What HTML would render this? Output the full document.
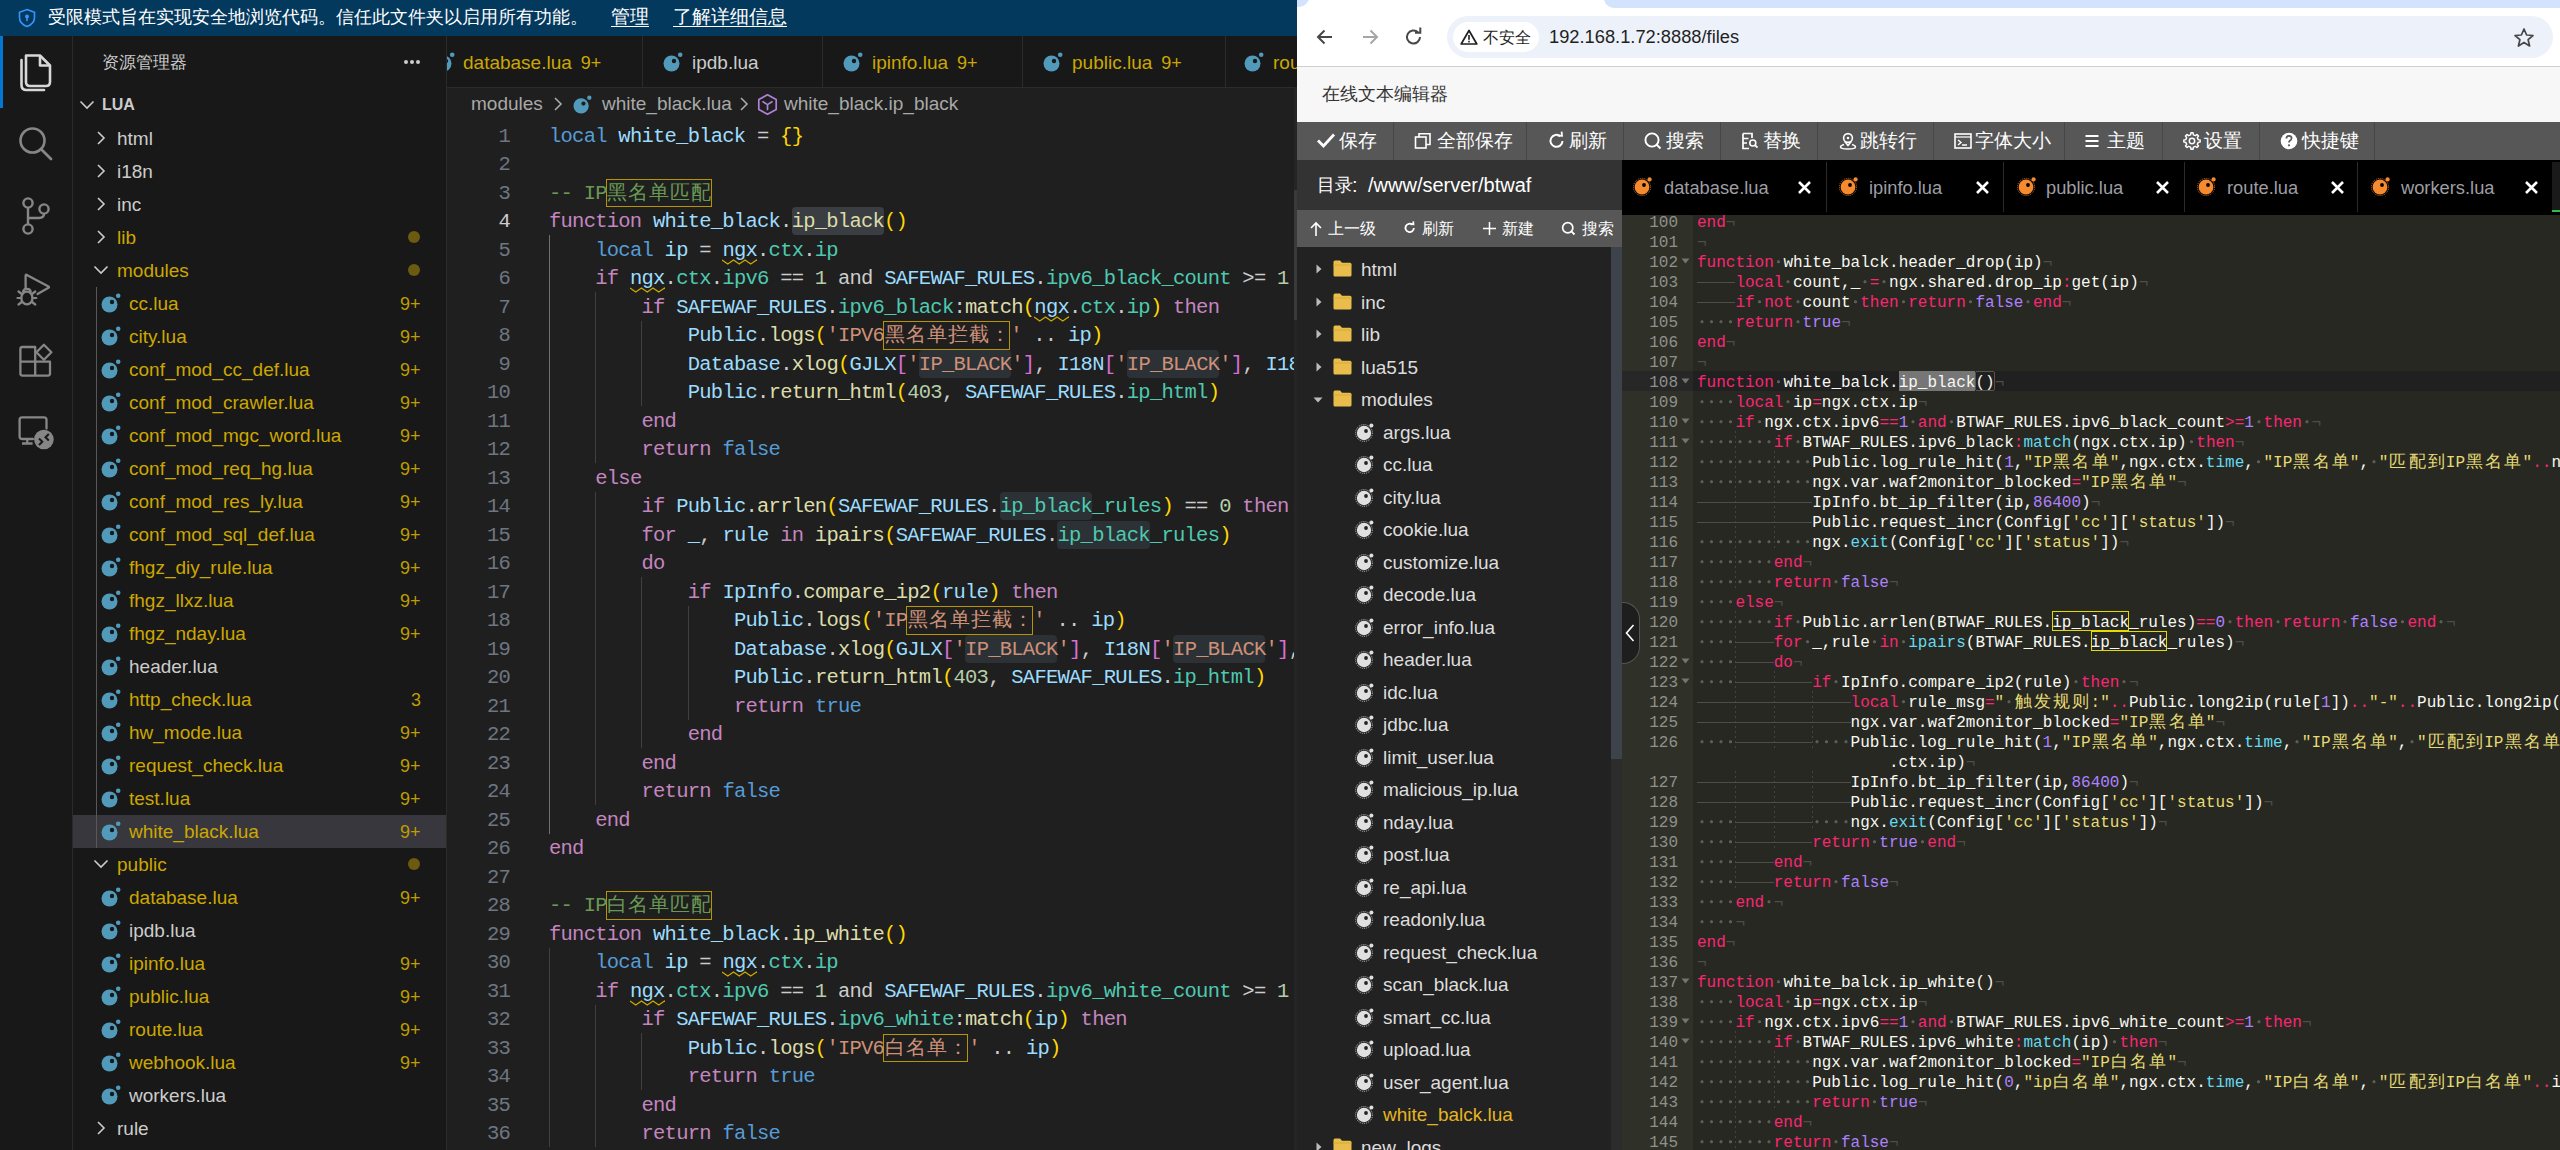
<!DOCTYPE html><html><head><meta charset="utf-8"><style>
*{box-sizing:border-box}
html,body{margin:0;padding:0}
body{width:2560px;height:1150px;overflow:hidden;position:relative;background:#1f1f1f;font-family:"Liberation Sans",sans-serif}
.a{position:absolute}
.t{position:absolute;white-space:pre;line-height:1}
#vsc{position:absolute;left:0;top:0;width:1297px;height:1150px;background:#1f1f1f;overflow:hidden}
#br{position:absolute;left:1297px;top:0;width:1263px;height:1150px;background:#fff;overflow:hidden}
.vl{position:absolute;left:549px;height:28.5px;line-height:28.5px;white-space:pre;font-family:"Liberation Mono",monospace;font-size:20.5px;letter-spacing:-0.75px;margin-top:1.5px}
.ln{position:absolute;left:460px;width:50px;text-align:right;height:28.5px;line-height:28.5px;font-family:"Liberation Mono",monospace;font-size:20.5px;letter-spacing:-0.75px;color:#6e7681;margin-top:1.5px}
b.k2{font-weight:normal;display:inline-block;width:21px;text-align:center;font-size:20px;line-height:28.5px;letter-spacing:0}
.sb{position:absolute;height:33px;line-height:33px;font-size:19px;white-space:pre;color:#cccccc}
.bad{position:absolute;left:400px;height:33px;line-height:33px;font-size:18px;color:#bf9c00;margin-top:1px}
.dot{position:absolute;left:408px;width:12px;height:12px;border-radius:6px;background:#6b5a10}
.al{position:absolute;left:1697px;height:20px;line-height:20px;margin-top:1.8px;white-space:pre;font-family:"Liberation Mono",monospace;font-size:16px;color:#f8f8f2}
.an{position:absolute;left:325px;width:56px;text-align:right;height:20px;line-height:20px;margin-top:1.8px;font-family:"Liberation Mono",monospace;font-size:16px;color:#8f908a}
.sp{display:inline-block;width:9.6px;height:20px;vertical-align:top;color:transparent;background:radial-gradient(circle at 50% 8.8px,#5d5d57 0,#5d5d57 1.2px,transparent 1.9px)}
.eol{color:#4e4e48}
.tb{display:inline-block;height:20px;vertical-align:top;background:linear-gradient(#4e4e48,#4e4e48) no-repeat 0 9.5px/100% 1px}
b.a2{font-weight:normal;display:inline-block;width:19.2px;text-align:center;font-size:17px;vertical-align:top;line-height:20px}
.ft{position:absolute;height:32px;line-height:32px;font-size:19px;color:#dddddd;white-space:pre}
.tbb{position:absolute;top:122px;height:38px;line-height:38px;font-size:19px;color:#fff;white-space:pre}
.tbs{position:absolute;top:122px;width:1px;height:38px;background:#474747}
.stb{position:absolute;top:210px;height:37px;line-height:37px;font-size:15.5px;color:#fff;white-space:pre}
.tab2{position:absolute;top:161px;height:54px;line-height:54px;font-size:18.3px;color:#9d9ea4;white-space:pre}
.x2{position:absolute;top:180px;width:15px;height:15px}
</style></head><body>
<div id="vsc">
<div class="a" style="left:0;top:0;width:1297px;height:36px;background:#04395e"></div>
<svg class="a" style="left:17px;top:8px" width="20" height="20" viewBox="0 0 20 20"><path d="M10 1.5 L17.5 4.2 V9.5 C17.5 14 14.3 17 10 18.5 C5.7 17 2.5 14 2.5 9.5 V4.2 Z" fill="none" stroke="#3794ff" stroke-width="1.6"/><circle cx="10" cy="8.6" r="2" fill="#3794ff"/><rect x="9.2" y="9.5" width="1.6" height="3.6" fill="#3794ff"/></svg>
<div class="t" style="left:48px;top:8px;font-size:18px;color:#ffffff">受限模式旨在实现安全地浏览代码。信任此文件夹以启用所有功能。</div>
<div class="t" style="left:611px;top:7px;font-size:19px;color:#ffffff;text-decoration:underline;text-underline-offset:3px">管理</div>
<div class="t" style="left:673px;top:7px;font-size:19px;color:#ffffff;text-decoration:underline;text-underline-offset:3px">了解详细信息</div>
<div class="a" style="left:0;top:36px;width:72px;height:1114px;background:#181818"></div>
<div class="a" style="left:0;top:36px;width:3px;height:72px;background:#0078d4"></div>
<svg class="a" style="left:17px;top:50px" width="38" height="42" viewBox="0 0 38 42"><path d="M9 5.5 H23 L33 15.5 V32 Q33 36 29 36 H13 Q9 36 9 32 Z" fill="none" stroke="#d7d7d7" stroke-width="2.6" stroke-linejoin="round"/><path d="M23 5.5 V15.5 H33" fill="none" stroke="#d7d7d7" stroke-width="2.6" stroke-linejoin="round"/><path d="M4.5 10 V35 Q4.5 40 9.5 40 H27" fill="none" stroke="#d7d7d7" stroke-width="2.6" stroke-linecap="round"/></svg>
<svg class="a" style="left:17px;top:125px" width="38" height="38" viewBox="0 0 38 38"><circle cx="15.5" cy="15.5" r="12" fill="none" stroke="#868686" stroke-width="2.6"/><path d="M24 24 L34 34" stroke="#868686" stroke-width="2.8" stroke-linecap="round"/></svg>
<svg class="a" style="left:17px;top:196px" width="38" height="40" viewBox="0 0 38 40"><circle cx="11" cy="7" r="4.6" fill="none" stroke="#868686" stroke-width="2.4"/><circle cx="11" cy="33" r="4.6" fill="none" stroke="#868686" stroke-width="2.4"/><circle cx="27" cy="13" r="4.6" fill="none" stroke="#868686" stroke-width="2.4"/><path d="M11 11.6 V28.4 M27 17.6 Q27 22 22 22 H11" fill="none" stroke="#868686" stroke-width="2.4"/></svg>
<svg class="a" style="left:16px;top:270px" width="40" height="40" viewBox="0 0 40 40"><path d="M9.6 19 V5.5 Q9.6 4.3 10.8 4.9 L32.5 16.6 Q33.5 17.2 32.5 17.8 L21.5 24" fill="none" stroke="#868686" stroke-width="2.3" stroke-linejoin="round" stroke-linecap="round"/><path d="M7 22.5 Q7 18.8 10.9 18.8 Q14.8 18.8 14.8 22.5" fill="none" stroke="#868686" stroke-width="2.2"/><ellipse cx="10.9" cy="28" rx="5.6" ry="6.3" fill="none" stroke="#868686" stroke-width="2.3"/><path d="M1.5 28 H5.3 M16.5 28 H20.3 M2.5 21.5 L5.8 24 M19.3 21.5 L16 24 M2.5 34.5 L5.8 32 M19.3 34.5 L16 32" fill="none" stroke="#868686" stroke-width="2.2" stroke-linecap="round"/></svg>
<svg class="a" style="left:17px;top:341px" width="38" height="38" viewBox="0 0 38 38"><path d="M3.4 8 Q3.4 6 5.4 6 H18.2 V20.7 H33 V32.6 Q33 34.6 31 34.6 H5.4 Q3.4 34.6 3.4 32.6 Z M3.4 20.7 H18.2 V34.6" fill="none" stroke="#868686" stroke-width="2.3" stroke-linejoin="round"/><path d="M26.9 3.7 L34.4 11.2 L26.9 18.7 L19.4 11.2 Z" fill="none" stroke="#868686" stroke-width="2.3" stroke-linejoin="round"/></svg>
<svg class="a" style="left:16px;top:412px" width="40" height="40" viewBox="0 0 40 40"><path d="M17 27 H6 Q3.6 27 3.6 24.6 V7.8 Q3.6 5.4 6 5.4 H28 Q30.5 5.4 30.5 7.8 V16.5" fill="none" stroke="#868686" stroke-width="2.3" stroke-linecap="round"/><path d="M6 31.5 H16.6 M11.3 27 V31.5" stroke="#868686" stroke-width="2.3"/><circle cx="27.9" cy="27.5" r="9.8" fill="#868686"/><path d="M23 26.5 L26.3 29.8 L23 33 M32.8 22 L29.5 25.3 L32.8 28.5" fill="none" stroke="#181818" stroke-width="2"/></svg>
<div class="a" style="left:72px;top:36px;width:375px;height:1114px;background:#181818;border-left:1px solid #2b2b2b;border-right:1px solid #2b2b2b"></div>
<div class="t" style="left:102px;top:54px;font-size:16.5px;color:#cccccc">资源管理器</div>
<div class="a" style="left:404px;top:60px;width:4px;height:4px;border-radius:2px;background:#ccc"></div><div class="a" style="left:410px;top:60px;width:4px;height:4px;border-radius:2px;background:#ccc"></div><div class="a" style="left:416px;top:60px;width:4px;height:4px;border-radius:2px;background:#ccc"></div>
<svg class="a" style="left:79px;top:97px" width="16" height="16" viewBox="0 0 16 16"><path d="M1.5 4.5 L8 11 L14.5 4.5" fill="none" stroke="#cccccc" stroke-width="1.6"/></svg>
<div class="t" style="left:102px;top:97px;font-size:16px;font-weight:bold;color:#cccccc">LUA</div>
<svg class="a" style="left:93px;top:130px" width="16" height="16" viewBox="0 0 16 16"><path d="M5 2 L11 8 L5 14" fill="none" stroke="#cccccc" stroke-width="1.6"/></svg>
<div class="sb" style="left:117px;top:121.5px;color:#cccccc">html</div>
<svg class="a" style="left:93px;top:163px" width="16" height="16" viewBox="0 0 16 16"><path d="M5 2 L11 8 L5 14" fill="none" stroke="#cccccc" stroke-width="1.6"/></svg>
<div class="sb" style="left:117px;top:154.5px;color:#cccccc">i18n</div>
<svg class="a" style="left:93px;top:196px" width="16" height="16" viewBox="0 0 16 16"><path d="M5 2 L11 8 L5 14" fill="none" stroke="#cccccc" stroke-width="1.6"/></svg>
<div class="sb" style="left:117px;top:187.5px;color:#cccccc">inc</div>
<svg class="a" style="left:93px;top:229px" width="16" height="16" viewBox="0 0 16 16"><path d="M5 2 L11 8 L5 14" fill="none" stroke="#cccccc" stroke-width="1.6"/></svg>
<div class="sb" style="left:117px;top:220.5px;color:#cca700">lib</div>
<div class="dot" style="top:231px"></div>
<svg class="a" style="left:93px;top:262px" width="16" height="16" viewBox="0 0 16 16"><path d="M1.5 4.5 L8 11 L14.5 4.5" fill="none" stroke="#cccccc" stroke-width="1.6"/></svg>
<div class="sb" style="left:117px;top:253.5px;color:#cca700">modules</div>
<div class="dot" style="top:264px"></div>
<svg style="position:absolute;left:101px;top:293px" width="20" height="20" viewBox="0 0 20 20"><circle cx="8.5" cy="11.5" r="8" fill="#519aba"/><circle cx="11" cy="9" r="2.2" fill="#181818"/><circle cx="17.2" cy="2.8" r="2.3" fill="#519aba"/></svg>
<div class="sb" style="left:129px;top:286.5px;color:#cca700">cc.lua</div>
<div class="bad" style="top:286.5px;left:400px">9+</div>
<svg style="position:absolute;left:101px;top:326px" width="20" height="20" viewBox="0 0 20 20"><circle cx="8.5" cy="11.5" r="8" fill="#519aba"/><circle cx="11" cy="9" r="2.2" fill="#181818"/><circle cx="17.2" cy="2.8" r="2.3" fill="#519aba"/></svg>
<div class="sb" style="left:129px;top:319.5px;color:#cca700">city.lua</div>
<div class="bad" style="top:319.5px;left:400px">9+</div>
<svg style="position:absolute;left:101px;top:359px" width="20" height="20" viewBox="0 0 20 20"><circle cx="8.5" cy="11.5" r="8" fill="#519aba"/><circle cx="11" cy="9" r="2.2" fill="#181818"/><circle cx="17.2" cy="2.8" r="2.3" fill="#519aba"/></svg>
<div class="sb" style="left:129px;top:352.5px;color:#cca700">conf_mod_cc_def.lua</div>
<div class="bad" style="top:352.5px;left:400px">9+</div>
<svg style="position:absolute;left:101px;top:392px" width="20" height="20" viewBox="0 0 20 20"><circle cx="8.5" cy="11.5" r="8" fill="#519aba"/><circle cx="11" cy="9" r="2.2" fill="#181818"/><circle cx="17.2" cy="2.8" r="2.3" fill="#519aba"/></svg>
<div class="sb" style="left:129px;top:385.5px;color:#cca700">conf_mod_crawler.lua</div>
<div class="bad" style="top:385.5px;left:400px">9+</div>
<svg style="position:absolute;left:101px;top:425px" width="20" height="20" viewBox="0 0 20 20"><circle cx="8.5" cy="11.5" r="8" fill="#519aba"/><circle cx="11" cy="9" r="2.2" fill="#181818"/><circle cx="17.2" cy="2.8" r="2.3" fill="#519aba"/></svg>
<div class="sb" style="left:129px;top:418.5px;color:#cca700">conf_mod_mgc_word.lua</div>
<div class="bad" style="top:418.5px;left:400px">9+</div>
<svg style="position:absolute;left:101px;top:458px" width="20" height="20" viewBox="0 0 20 20"><circle cx="8.5" cy="11.5" r="8" fill="#519aba"/><circle cx="11" cy="9" r="2.2" fill="#181818"/><circle cx="17.2" cy="2.8" r="2.3" fill="#519aba"/></svg>
<div class="sb" style="left:129px;top:451.5px;color:#cca700">conf_mod_req_hg.lua</div>
<div class="bad" style="top:451.5px;left:400px">9+</div>
<svg style="position:absolute;left:101px;top:491px" width="20" height="20" viewBox="0 0 20 20"><circle cx="8.5" cy="11.5" r="8" fill="#519aba"/><circle cx="11" cy="9" r="2.2" fill="#181818"/><circle cx="17.2" cy="2.8" r="2.3" fill="#519aba"/></svg>
<div class="sb" style="left:129px;top:484.5px;color:#cca700">conf_mod_res_ly.lua</div>
<div class="bad" style="top:484.5px;left:400px">9+</div>
<svg style="position:absolute;left:101px;top:524px" width="20" height="20" viewBox="0 0 20 20"><circle cx="8.5" cy="11.5" r="8" fill="#519aba"/><circle cx="11" cy="9" r="2.2" fill="#181818"/><circle cx="17.2" cy="2.8" r="2.3" fill="#519aba"/></svg>
<div class="sb" style="left:129px;top:517.5px;color:#cca700">conf_mod_sql_def.lua</div>
<div class="bad" style="top:517.5px;left:400px">9+</div>
<svg style="position:absolute;left:101px;top:557px" width="20" height="20" viewBox="0 0 20 20"><circle cx="8.5" cy="11.5" r="8" fill="#519aba"/><circle cx="11" cy="9" r="2.2" fill="#181818"/><circle cx="17.2" cy="2.8" r="2.3" fill="#519aba"/></svg>
<div class="sb" style="left:129px;top:550.5px;color:#cca700">fhgz_diy_rule.lua</div>
<div class="bad" style="top:550.5px;left:400px">9+</div>
<svg style="position:absolute;left:101px;top:590px" width="20" height="20" viewBox="0 0 20 20"><circle cx="8.5" cy="11.5" r="8" fill="#519aba"/><circle cx="11" cy="9" r="2.2" fill="#181818"/><circle cx="17.2" cy="2.8" r="2.3" fill="#519aba"/></svg>
<div class="sb" style="left:129px;top:583.5px;color:#cca700">fhgz_llxz.lua</div>
<div class="bad" style="top:583.5px;left:400px">9+</div>
<svg style="position:absolute;left:101px;top:623px" width="20" height="20" viewBox="0 0 20 20"><circle cx="8.5" cy="11.5" r="8" fill="#519aba"/><circle cx="11" cy="9" r="2.2" fill="#181818"/><circle cx="17.2" cy="2.8" r="2.3" fill="#519aba"/></svg>
<div class="sb" style="left:129px;top:616.5px;color:#cca700">fhgz_nday.lua</div>
<div class="bad" style="top:616.5px;left:400px">9+</div>
<svg style="position:absolute;left:101px;top:656px" width="20" height="20" viewBox="0 0 20 20"><circle cx="8.5" cy="11.5" r="8" fill="#519aba"/><circle cx="11" cy="9" r="2.2" fill="#181818"/><circle cx="17.2" cy="2.8" r="2.3" fill="#519aba"/></svg>
<div class="sb" style="left:129px;top:649.5px;color:#cccccc">header.lua</div>
<svg style="position:absolute;left:101px;top:689px" width="20" height="20" viewBox="0 0 20 20"><circle cx="8.5" cy="11.5" r="8" fill="#519aba"/><circle cx="11" cy="9" r="2.2" fill="#181818"/><circle cx="17.2" cy="2.8" r="2.3" fill="#519aba"/></svg>
<div class="sb" style="left:129px;top:682.5px;color:#cca700">http_check.lua</div>
<div class="bad" style="top:682.5px;left:411px">3</div>
<svg style="position:absolute;left:101px;top:722px" width="20" height="20" viewBox="0 0 20 20"><circle cx="8.5" cy="11.5" r="8" fill="#519aba"/><circle cx="11" cy="9" r="2.2" fill="#181818"/><circle cx="17.2" cy="2.8" r="2.3" fill="#519aba"/></svg>
<div class="sb" style="left:129px;top:715.5px;color:#cca700">hw_mode.lua</div>
<div class="bad" style="top:715.5px;left:400px">9+</div>
<svg style="position:absolute;left:101px;top:755px" width="20" height="20" viewBox="0 0 20 20"><circle cx="8.5" cy="11.5" r="8" fill="#519aba"/><circle cx="11" cy="9" r="2.2" fill="#181818"/><circle cx="17.2" cy="2.8" r="2.3" fill="#519aba"/></svg>
<div class="sb" style="left:129px;top:748.5px;color:#cca700">request_check.lua</div>
<div class="bad" style="top:748.5px;left:400px">9+</div>
<svg style="position:absolute;left:101px;top:788px" width="20" height="20" viewBox="0 0 20 20"><circle cx="8.5" cy="11.5" r="8" fill="#519aba"/><circle cx="11" cy="9" r="2.2" fill="#181818"/><circle cx="17.2" cy="2.8" r="2.3" fill="#519aba"/></svg>
<div class="sb" style="left:129px;top:781.5px;color:#cca700">test.lua</div>
<div class="bad" style="top:781.5px;left:400px">9+</div>
<div class="a" style="left:73px;top:814.5px;width:373px;height:33px;background:#37373d"></div>
<svg style="position:absolute;left:101px;top:821px" width="20" height="20" viewBox="0 0 20 20"><circle cx="8.5" cy="11.5" r="8" fill="#519aba"/><circle cx="11" cy="9" r="2.2" fill="#181818"/><circle cx="17.2" cy="2.8" r="2.3" fill="#519aba"/></svg>
<div class="sb" style="left:129px;top:814.5px;color:#cca700">white_black.lua</div>
<div class="bad" style="top:814.5px;left:400px">9+</div>
<svg class="a" style="left:93px;top:856px" width="16" height="16" viewBox="0 0 16 16"><path d="M1.5 4.5 L8 11 L14.5 4.5" fill="none" stroke="#cccccc" stroke-width="1.6"/></svg>
<div class="sb" style="left:117px;top:847.5px;color:#cca700">public</div>
<div class="dot" style="top:858px"></div>
<svg style="position:absolute;left:101px;top:887px" width="20" height="20" viewBox="0 0 20 20"><circle cx="8.5" cy="11.5" r="8" fill="#519aba"/><circle cx="11" cy="9" r="2.2" fill="#181818"/><circle cx="17.2" cy="2.8" r="2.3" fill="#519aba"/></svg>
<div class="sb" style="left:129px;top:880.5px;color:#cca700">database.lua</div>
<div class="bad" style="top:880.5px;left:400px">9+</div>
<svg style="position:absolute;left:101px;top:920px" width="20" height="20" viewBox="0 0 20 20"><circle cx="8.5" cy="11.5" r="8" fill="#519aba"/><circle cx="11" cy="9" r="2.2" fill="#181818"/><circle cx="17.2" cy="2.8" r="2.3" fill="#519aba"/></svg>
<div class="sb" style="left:129px;top:913.5px;color:#cccccc">ipdb.lua</div>
<svg style="position:absolute;left:101px;top:953px" width="20" height="20" viewBox="0 0 20 20"><circle cx="8.5" cy="11.5" r="8" fill="#519aba"/><circle cx="11" cy="9" r="2.2" fill="#181818"/><circle cx="17.2" cy="2.8" r="2.3" fill="#519aba"/></svg>
<div class="sb" style="left:129px;top:946.5px;color:#cca700">ipinfo.lua</div>
<div class="bad" style="top:946.5px;left:400px">9+</div>
<svg style="position:absolute;left:101px;top:986px" width="20" height="20" viewBox="0 0 20 20"><circle cx="8.5" cy="11.5" r="8" fill="#519aba"/><circle cx="11" cy="9" r="2.2" fill="#181818"/><circle cx="17.2" cy="2.8" r="2.3" fill="#519aba"/></svg>
<div class="sb" style="left:129px;top:979.5px;color:#cca700">public.lua</div>
<div class="bad" style="top:979.5px;left:400px">9+</div>
<svg style="position:absolute;left:101px;top:1019px" width="20" height="20" viewBox="0 0 20 20"><circle cx="8.5" cy="11.5" r="8" fill="#519aba"/><circle cx="11" cy="9" r="2.2" fill="#181818"/><circle cx="17.2" cy="2.8" r="2.3" fill="#519aba"/></svg>
<div class="sb" style="left:129px;top:1012.5px;color:#cca700">route.lua</div>
<div class="bad" style="top:1012.5px;left:400px">9+</div>
<svg style="position:absolute;left:101px;top:1052px" width="20" height="20" viewBox="0 0 20 20"><circle cx="8.5" cy="11.5" r="8" fill="#519aba"/><circle cx="11" cy="9" r="2.2" fill="#181818"/><circle cx="17.2" cy="2.8" r="2.3" fill="#519aba"/></svg>
<div class="sb" style="left:129px;top:1045.5px;color:#cca700">webhook.lua</div>
<div class="bad" style="top:1045.5px;left:400px">9+</div>
<svg style="position:absolute;left:101px;top:1085px" width="20" height="20" viewBox="0 0 20 20"><circle cx="8.5" cy="11.5" r="8" fill="#519aba"/><circle cx="11" cy="9" r="2.2" fill="#181818"/><circle cx="17.2" cy="2.8" r="2.3" fill="#519aba"/></svg>
<div class="sb" style="left:129px;top:1078.5px;color:#cccccc">workers.lua</div>
<svg class="a" style="left:93px;top:1120px" width="16" height="16" viewBox="0 0 16 16"><path d="M5 2 L11 8 L5 14" fill="none" stroke="#cccccc" stroke-width="1.6"/></svg>
<div class="sb" style="left:117px;top:1111.5px;color:#cccccc">rule</div>
<div class="a" style="left:96px;top:287px;width:1px;height:561px;background:#585858"></div>
<div class="a" style="left:447px;top:36px;width:850px;height:52px;background:#181818;border-bottom:1px solid #2b2b2b"></div>
<div class="a" style="left:642px;top:36px;width:1px;height:52px;background:#2b2b2b"></div>
<div class="a" style="left:822px;top:36px;width:1px;height:52px;background:#2b2b2b"></div>
<div class="a" style="left:1022px;top:36px;width:1px;height:52px;background:#2b2b2b"></div>
<div class="a" style="left:1225px;top:36px;width:1px;height:52px;background:#2b2b2b"></div>
<div class="a" style="left:447px;top:50px;width:8px;height:24px;overflow:hidden"><svg style="position:absolute;left:-12px;top:2px" width="20" height="20" viewBox="0 0 20 20"><circle cx="8.5" cy="11.5" r="8" fill="#519aba"/><circle cx="11" cy="9" r="2.2" fill="#181818"/><circle cx="17.2" cy="2.8" r="2.3" fill="#519aba"/></svg></div>
<div class="t" style="left:463px;top:53px;font-size:19px;color:#cca700">database.lua<span style="margin-left:9px;font-size:18px">9+</span></div>
<svg style="position:absolute;left:663px;top:52px" width="20" height="20" viewBox="0 0 20 20"><circle cx="8.5" cy="11.5" r="8" fill="#519aba"/><circle cx="11" cy="9" r="2.2" fill="#181818"/><circle cx="17.2" cy="2.8" r="2.3" fill="#519aba"/></svg>
<div class="t" style="left:692px;top:53px;font-size:19px;color:#cccccc">ipdb.lua</div>
<svg style="position:absolute;left:843px;top:52px" width="20" height="20" viewBox="0 0 20 20"><circle cx="8.5" cy="11.5" r="8" fill="#519aba"/><circle cx="11" cy="9" r="2.2" fill="#181818"/><circle cx="17.2" cy="2.8" r="2.3" fill="#519aba"/></svg>
<div class="t" style="left:872px;top:53px;font-size:19px;color:#cca700">ipinfo.lua<span style="margin-left:9px;font-size:18px">9+</span></div>
<svg style="position:absolute;left:1043px;top:52px" width="20" height="20" viewBox="0 0 20 20"><circle cx="8.5" cy="11.5" r="8" fill="#519aba"/><circle cx="11" cy="9" r="2.2" fill="#181818"/><circle cx="17.2" cy="2.8" r="2.3" fill="#519aba"/></svg>
<div class="t" style="left:1072px;top:53px;font-size:19px;color:#cca700">public.lua<span style="margin-left:9px;font-size:18px">9+</span></div>
<svg style="position:absolute;left:1244px;top:52px" width="20" height="20" viewBox="0 0 20 20"><circle cx="8.5" cy="11.5" r="8" fill="#519aba"/><circle cx="11" cy="9" r="2.2" fill="#181818"/><circle cx="17.2" cy="2.8" r="2.3" fill="#519aba"/></svg>
<div class="t" style="left:1273px;top:53px;font-size:19px;color:#cca700">route.lua<span style="margin-left:9px;font-size:18px">9+</span></div>
<div class="t" style="left:471px;top:94px;font-size:19px;color:#a9a9a9">modules</div>
<svg class="a" style="left:550px;top:96px" width="16" height="16" viewBox="0 0 16 16"><path d="M5 2 L11 8 L5 14" fill="none" stroke="#a9a9a9" stroke-width="1.6"/></svg>
<svg style="position:absolute;left:573px;top:95px" width="19" height="19" viewBox="0 0 20 20"><circle cx="8.5" cy="11.5" r="8" fill="#519aba"/><circle cx="11" cy="9" r="2.2" fill="#1f1f1f"/><circle cx="17.2" cy="2.8" r="2.3" fill="#519aba"/></svg>
<div class="t" style="left:602px;top:94px;font-size:19px;color:#a9a9a9">white_black.lua</div>
<svg class="a" style="left:736px;top:96px" width="16" height="16" viewBox="0 0 16 16"><path d="M5 2 L11 8 L5 14" fill="none" stroke="#a9a9a9" stroke-width="1.6"/></svg>
<svg class="a" style="left:756px;top:93px" width="23" height="23" viewBox="0 0 23 23"><path d="M11.5 1.8 L20.2 6.6 V16.4 L11.5 21.2 L2.8 16.4 V6.6 Z" fill="none" stroke="#b180d7" stroke-width="1.7" stroke-linejoin="round"/><path d="M7 8.8 L11.5 11.6 L16 8.8 M11.5 11.6 V16.5" fill="none" stroke="#b180d7" stroke-width="1.7" stroke-linecap="round"/></svg>
<div class="t" style="left:784px;top:94px;font-size:19px;color:#a9a9a9">white_black.ip_black</div>
<div class="a" style="left:549.0px;top:235.0px;width:1px;height:598.5px;background:#707070"></div>
<div class="a" style="left:595.2px;top:292.0px;width:1px;height:171.0px;background:#404040"></div>
<div class="a" style="left:641.4px;top:320.5px;width:1px;height:85.5px;background:#404040"></div>
<div class="a" style="left:595.2px;top:491.5px;width:1px;height:313.5px;background:#404040"></div>
<div class="a" style="left:641.4px;top:577.0px;width:1px;height:171.0px;background:#404040"></div>
<div class="a" style="left:687.6px;top:605.5px;width:1px;height:114.0px;background:#404040"></div>
<div class="a" style="left:549.0px;top:947.5px;width:1px;height:199.5px;background:#404040"></div>
<div class="a" style="left:595.2px;top:1004.5px;width:1px;height:142.5px;background:#404040"></div>
<div class="a" style="left:641.4px;top:1033.0px;width:1px;height:57.0px;background:#404040"></div>
<div class="a" style="left:791.6px;top:207.0px;width:92.4px;height:28.0px;background:#3a3d41;border-radius:4px"></div>
<div class="a" style="left:918.6px;top:349.5px;width:92.4px;height:28.0px;background:#2c3136;border-radius:4px"></div>
<div class="a" style="left:1126.5px;top:349.5px;width:92.4px;height:28.0px;background:#2c3136;border-radius:4px"></div>
<div class="a" style="left:999.5px;top:492.0px;width:92.4px;height:28.0px;background:#2c3136;border-radius:4px"></div>
<div class="a" style="left:1057.2px;top:520.5px;width:92.4px;height:28.0px;background:#2c3136;border-radius:4px"></div>
<div class="a" style="left:964.8px;top:634.5px;width:92.4px;height:28.0px;background:#2c3136;border-radius:4px"></div>
<div class="a" style="left:1172.7px;top:634.5px;width:92.4px;height:28.0px;background:#2c3136;border-radius:4px"></div>
<div class="a" style="left:605.8px;top:178.5px;width:106.0px;height:28.5px;border:1.5px solid #b89500"></div>
<div class="a" style="left:883.0px;top:321.0px;width:127.0px;height:28.5px;border:1.5px solid #b89500"></div>
<div class="a" style="left:906.1px;top:606.0px;width:127.0px;height:28.5px;border:1.5px solid #b89500"></div>
<div class="a" style="left:605.8px;top:891.0px;width:106.0px;height:28.5px;border:1.5px solid #b89500"></div>
<div class="a" style="left:883.0px;top:1033.5px;width:85.0px;height:28.5px;border:1.5px solid #b89500"></div>
<div class="ln" style="top:121.0px;">1</div>
<div class="vl" style="top:121.0px"><span style="color:#569cd6">local</span><span style="color:#cccccc"> </span><span style="color:#9cdcfe">white_black</span><span style="color:#cccccc"> </span><span style="color:#cccccc">=</span><span style="color:#cccccc"> </span><span style="color:#ffd700">{</span><span style="color:#ffd700">}</span></div>
<div class="ln" style="top:149.5px;">2</div>
<div class="ln" style="top:178.0px;">3</div>
<div class="vl" style="top:178.0px"><span style="color:#6a9955">-- IP<b class="k2">黑</b><b class="k2">名</b><b class="k2">单</b><b class="k2">匹</b><b class="k2">配</b></span></div>
<div class="ln" style="top:206.5px;color:#cccccc">4</div>
<div class="vl" style="top:206.5px"><span style="color:#c586c0">function</span><span style="color:#cccccc"> </span><span style="color:#9cdcfe">white_black</span><span style="color:#cccccc">.</span><span style="color:#dcdcaa">ip_black</span><span style="color:#ffd700">(</span><span style="color:#ffd700">)</span></div>
<div class="ln" style="top:235.0px;">5</div>
<div class="vl" style="top:235.0px"><span style="color:#cccccc"> </span><span style="color:#cccccc"> </span><span style="color:#cccccc"> </span><span style="color:#cccccc"> </span><span style="color:#569cd6">local</span><span style="color:#cccccc"> </span><span style="color:#9cdcfe">ip</span><span style="color:#cccccc"> </span><span style="color:#cccccc">=</span><span style="color:#cccccc"> </span><span style="color:#9cdcfe">ngx</span><span style="color:#cccccc">.</span><span style="color:#4ec9b0">ctx</span><span style="color:#cccccc">.</span><span style="color:#4ec9b0">ip</span></div>
<div class="ln" style="top:263.5px;">6</div>
<div class="vl" style="top:263.5px"><span style="color:#cccccc"> </span><span style="color:#cccccc"> </span><span style="color:#cccccc"> </span><span style="color:#cccccc"> </span><span style="color:#c586c0">if</span><span style="color:#cccccc"> </span><span style="color:#9cdcfe">ngx</span><span style="color:#cccccc">.</span><span style="color:#4ec9b0">ctx</span><span style="color:#cccccc">.</span><span style="color:#4ec9b0">ipv6</span><span style="color:#cccccc"> </span><span style="color:#cccccc">=</span><span style="color:#cccccc">=</span><span style="color:#cccccc"> </span><span style="color:#b5cea8">1</span><span style="color:#cccccc"> </span><span style="color:#cccccc">and</span><span style="color:#cccccc"> </span><span style="color:#9cdcfe">SAFEWAF_RULES</span><span style="color:#cccccc">.</span><span style="color:#4ec9b0">ipv6_black_count</span><span style="color:#cccccc"> </span><span style="color:#cccccc">&gt;</span><span style="color:#cccccc">=</span><span style="color:#cccccc"> </span><span style="color:#b5cea8">1</span><span style="color:#cccccc"> </span><span style="color:#c586c0">then</span></div>
<div class="ln" style="top:292.0px;">7</div>
<div class="vl" style="top:292.0px"><span style="color:#cccccc"> </span><span style="color:#cccccc"> </span><span style="color:#cccccc"> </span><span style="color:#cccccc"> </span><span style="color:#cccccc"> </span><span style="color:#cccccc"> </span><span style="color:#cccccc"> </span><span style="color:#cccccc"> </span><span style="color:#c586c0">if</span><span style="color:#cccccc"> </span><span style="color:#9cdcfe">SAFEWAF_RULES</span><span style="color:#cccccc">.</span><span style="color:#4ec9b0">ipv6_black</span><span style="color:#cccccc">:</span><span style="color:#dcdcaa">match</span><span style="color:#ffd700">(</span><span style="color:#9cdcfe">ngx</span><span style="color:#cccccc">.</span><span style="color:#4ec9b0">ctx</span><span style="color:#cccccc">.</span><span style="color:#4ec9b0">ip</span><span style="color:#ffd700">)</span><span style="color:#cccccc"> </span><span style="color:#c586c0">then</span></div>
<div class="ln" style="top:320.5px;">8</div>
<div class="vl" style="top:320.5px"><span style="color:#cccccc"> </span><span style="color:#cccccc"> </span><span style="color:#cccccc"> </span><span style="color:#cccccc"> </span><span style="color:#cccccc"> </span><span style="color:#cccccc"> </span><span style="color:#cccccc"> </span><span style="color:#cccccc"> </span><span style="color:#cccccc"> </span><span style="color:#cccccc"> </span><span style="color:#cccccc"> </span><span style="color:#cccccc"> </span><span style="color:#9cdcfe">Public</span><span style="color:#cccccc">.</span><span style="color:#dcdcaa">logs</span><span style="color:#ffd700">(</span><span style="color:#ce9178">'IPV6<b class="k2">黑</b><b class="k2">名</b><b class="k2">单</b><b class="k2">拦</b><b class="k2">截</b><b class="k2">：</b>'</span><span style="color:#cccccc"> </span><span style="color:#cccccc">.</span><span style="color:#cccccc">.</span><span style="color:#cccccc"> </span><span style="color:#9cdcfe">ip</span><span style="color:#ffd700">)</span></div>
<div class="ln" style="top:349.0px;">9</div>
<div class="vl" style="top:349.0px"><span style="color:#cccccc"> </span><span style="color:#cccccc"> </span><span style="color:#cccccc"> </span><span style="color:#cccccc"> </span><span style="color:#cccccc"> </span><span style="color:#cccccc"> </span><span style="color:#cccccc"> </span><span style="color:#cccccc"> </span><span style="color:#cccccc"> </span><span style="color:#cccccc"> </span><span style="color:#cccccc"> </span><span style="color:#cccccc"> </span><span style="color:#9cdcfe">Database</span><span style="color:#cccccc">.</span><span style="color:#dcdcaa">xlog</span><span style="color:#ffd700">(</span><span style="color:#9cdcfe">GJLX</span><span style="color:#da70d6">[</span><span style="color:#ce9178">'IP_BLACK'</span><span style="color:#da70d6">]</span><span style="color:#cccccc">,</span><span style="color:#cccccc"> </span><span style="color:#9cdcfe">I18N</span><span style="color:#da70d6">[</span><span style="color:#ce9178">'IP_BLACK'</span><span style="color:#da70d6">]</span><span style="color:#cccccc">,</span><span style="color:#cccccc"> </span><span style="color:#9cdcfe">I18N</span><span style="color:#da70d6">[</span><span style="color:#ce9178">'IP_BLACK'</span><span style="color:#da70d6">]</span><span style="color:#ffd700">)</span></div>
<div class="ln" style="top:377.5px;">10</div>
<div class="vl" style="top:377.5px"><span style="color:#cccccc"> </span><span style="color:#cccccc"> </span><span style="color:#cccccc"> </span><span style="color:#cccccc"> </span><span style="color:#cccccc"> </span><span style="color:#cccccc"> </span><span style="color:#cccccc"> </span><span style="color:#cccccc"> </span><span style="color:#cccccc"> </span><span style="color:#cccccc"> </span><span style="color:#cccccc"> </span><span style="color:#cccccc"> </span><span style="color:#9cdcfe">Public</span><span style="color:#cccccc">.</span><span style="color:#dcdcaa">return_html</span><span style="color:#ffd700">(</span><span style="color:#b5cea8">403</span><span style="color:#cccccc">,</span><span style="color:#cccccc"> </span><span style="color:#9cdcfe">SAFEWAF_RULES</span><span style="color:#cccccc">.</span><span style="color:#4ec9b0">ip_html</span><span style="color:#ffd700">)</span></div>
<div class="ln" style="top:406.0px;">11</div>
<div class="vl" style="top:406.0px"><span style="color:#cccccc"> </span><span style="color:#cccccc"> </span><span style="color:#cccccc"> </span><span style="color:#cccccc"> </span><span style="color:#cccccc"> </span><span style="color:#cccccc"> </span><span style="color:#cccccc"> </span><span style="color:#cccccc"> </span><span style="color:#c586c0">end</span></div>
<div class="ln" style="top:434.5px;">12</div>
<div class="vl" style="top:434.5px"><span style="color:#cccccc"> </span><span style="color:#cccccc"> </span><span style="color:#cccccc"> </span><span style="color:#cccccc"> </span><span style="color:#cccccc"> </span><span style="color:#cccccc"> </span><span style="color:#cccccc"> </span><span style="color:#cccccc"> </span><span style="color:#c586c0">return</span><span style="color:#cccccc"> </span><span style="color:#569cd6">false</span></div>
<div class="ln" style="top:463.0px;">13</div>
<div class="vl" style="top:463.0px"><span style="color:#cccccc"> </span><span style="color:#cccccc"> </span><span style="color:#cccccc"> </span><span style="color:#cccccc"> </span><span style="color:#c586c0">else</span></div>
<div class="ln" style="top:491.5px;">14</div>
<div class="vl" style="top:491.5px"><span style="color:#cccccc"> </span><span style="color:#cccccc"> </span><span style="color:#cccccc"> </span><span style="color:#cccccc"> </span><span style="color:#cccccc"> </span><span style="color:#cccccc"> </span><span style="color:#cccccc"> </span><span style="color:#cccccc"> </span><span style="color:#c586c0">if</span><span style="color:#cccccc"> </span><span style="color:#9cdcfe">Public</span><span style="color:#cccccc">.</span><span style="color:#dcdcaa">arrlen</span><span style="color:#ffd700">(</span><span style="color:#9cdcfe">SAFEWAF_RULES</span><span style="color:#cccccc">.</span><span style="color:#4ec9b0">ip_black_rules</span><span style="color:#ffd700">)</span><span style="color:#cccccc"> </span><span style="color:#cccccc">=</span><span style="color:#cccccc">=</span><span style="color:#cccccc"> </span><span style="color:#b5cea8">0</span><span style="color:#cccccc"> </span><span style="color:#c586c0">then</span><span style="color:#cccccc"> </span><span style="color:#c586c0">return</span><span style="color:#cccccc"> </span><span style="color:#569cd6">false</span><span style="color:#cccccc"> </span><span style="color:#c586c0">end</span></div>
<div class="ln" style="top:520.0px;">15</div>
<div class="vl" style="top:520.0px"><span style="color:#cccccc"> </span><span style="color:#cccccc"> </span><span style="color:#cccccc"> </span><span style="color:#cccccc"> </span><span style="color:#cccccc"> </span><span style="color:#cccccc"> </span><span style="color:#cccccc"> </span><span style="color:#cccccc"> </span><span style="color:#c586c0">for</span><span style="color:#cccccc"> </span><span style="color:#9cdcfe">_</span><span style="color:#cccccc">,</span><span style="color:#cccccc"> </span><span style="color:#9cdcfe">rule</span><span style="color:#cccccc"> </span><span style="color:#c586c0">in</span><span style="color:#cccccc"> </span><span style="color:#dcdcaa">ipairs</span><span style="color:#ffd700">(</span><span style="color:#9cdcfe">SAFEWAF_RULES</span><span style="color:#cccccc">.</span><span style="color:#4ec9b0">ip_black_rules</span><span style="color:#ffd700">)</span></div>
<div class="ln" style="top:548.5px;">16</div>
<div class="vl" style="top:548.5px"><span style="color:#cccccc"> </span><span style="color:#cccccc"> </span><span style="color:#cccccc"> </span><span style="color:#cccccc"> </span><span style="color:#cccccc"> </span><span style="color:#cccccc"> </span><span style="color:#cccccc"> </span><span style="color:#cccccc"> </span><span style="color:#c586c0">do</span></div>
<div class="ln" style="top:577.0px;">17</div>
<div class="vl" style="top:577.0px"><span style="color:#cccccc"> </span><span style="color:#cccccc"> </span><span style="color:#cccccc"> </span><span style="color:#cccccc"> </span><span style="color:#cccccc"> </span><span style="color:#cccccc"> </span><span style="color:#cccccc"> </span><span style="color:#cccccc"> </span><span style="color:#cccccc"> </span><span style="color:#cccccc"> </span><span style="color:#cccccc"> </span><span style="color:#cccccc"> </span><span style="color:#c586c0">if</span><span style="color:#cccccc"> </span><span style="color:#9cdcfe">IpInfo</span><span style="color:#cccccc">.</span><span style="color:#dcdcaa">compare_ip2</span><span style="color:#ffd700">(</span><span style="color:#9cdcfe">rule</span><span style="color:#ffd700">)</span><span style="color:#cccccc"> </span><span style="color:#c586c0">then</span></div>
<div class="ln" style="top:605.5px;">18</div>
<div class="vl" style="top:605.5px"><span style="color:#cccccc"> </span><span style="color:#cccccc"> </span><span style="color:#cccccc"> </span><span style="color:#cccccc"> </span><span style="color:#cccccc"> </span><span style="color:#cccccc"> </span><span style="color:#cccccc"> </span><span style="color:#cccccc"> </span><span style="color:#cccccc"> </span><span style="color:#cccccc"> </span><span style="color:#cccccc"> </span><span style="color:#cccccc"> </span><span style="color:#cccccc"> </span><span style="color:#cccccc"> </span><span style="color:#cccccc"> </span><span style="color:#cccccc"> </span><span style="color:#9cdcfe">Public</span><span style="color:#cccccc">.</span><span style="color:#dcdcaa">logs</span><span style="color:#ffd700">(</span><span style="color:#ce9178">'IP<b class="k2">黑</b><b class="k2">名</b><b class="k2">单</b><b class="k2">拦</b><b class="k2">截</b><b class="k2">：</b>'</span><span style="color:#cccccc"> </span><span style="color:#cccccc">.</span><span style="color:#cccccc">.</span><span style="color:#cccccc"> </span><span style="color:#9cdcfe">ip</span><span style="color:#ffd700">)</span></div>
<div class="ln" style="top:634.0px;">19</div>
<div class="vl" style="top:634.0px"><span style="color:#cccccc"> </span><span style="color:#cccccc"> </span><span style="color:#cccccc"> </span><span style="color:#cccccc"> </span><span style="color:#cccccc"> </span><span style="color:#cccccc"> </span><span style="color:#cccccc"> </span><span style="color:#cccccc"> </span><span style="color:#cccccc"> </span><span style="color:#cccccc"> </span><span style="color:#cccccc"> </span><span style="color:#cccccc"> </span><span style="color:#cccccc"> </span><span style="color:#cccccc"> </span><span style="color:#cccccc"> </span><span style="color:#cccccc"> </span><span style="color:#9cdcfe">Database</span><span style="color:#cccccc">.</span><span style="color:#dcdcaa">xlog</span><span style="color:#ffd700">(</span><span style="color:#9cdcfe">GJLX</span><span style="color:#da70d6">[</span><span style="color:#ce9178">'IP_BLACK'</span><span style="color:#da70d6">]</span><span style="color:#cccccc">,</span><span style="color:#cccccc"> </span><span style="color:#9cdcfe">I18N</span><span style="color:#da70d6">[</span><span style="color:#ce9178">'IP_BLACK'</span><span style="color:#da70d6">]</span><span style="color:#cccccc">,</span><span style="color:#cccccc"> </span><span style="color:#9cdcfe">I18N</span><span style="color:#da70d6">[</span><span style="color:#ce9178">'IP_BLACK'</span><span style="color:#da70d6">]</span><span style="color:#ffd700">)</span></div>
<div class="ln" style="top:662.5px;">20</div>
<div class="vl" style="top:662.5px"><span style="color:#cccccc"> </span><span style="color:#cccccc"> </span><span style="color:#cccccc"> </span><span style="color:#cccccc"> </span><span style="color:#cccccc"> </span><span style="color:#cccccc"> </span><span style="color:#cccccc"> </span><span style="color:#cccccc"> </span><span style="color:#cccccc"> </span><span style="color:#cccccc"> </span><span style="color:#cccccc"> </span><span style="color:#cccccc"> </span><span style="color:#cccccc"> </span><span style="color:#cccccc"> </span><span style="color:#cccccc"> </span><span style="color:#cccccc"> </span><span style="color:#9cdcfe">Public</span><span style="color:#cccccc">.</span><span style="color:#dcdcaa">return_html</span><span style="color:#ffd700">(</span><span style="color:#b5cea8">403</span><span style="color:#cccccc">,</span><span style="color:#cccccc"> </span><span style="color:#9cdcfe">SAFEWAF_RULES</span><span style="color:#cccccc">.</span><span style="color:#4ec9b0">ip_html</span><span style="color:#ffd700">)</span></div>
<div class="ln" style="top:691.0px;">21</div>
<div class="vl" style="top:691.0px"><span style="color:#cccccc"> </span><span style="color:#cccccc"> </span><span style="color:#cccccc"> </span><span style="color:#cccccc"> </span><span style="color:#cccccc"> </span><span style="color:#cccccc"> </span><span style="color:#cccccc"> </span><span style="color:#cccccc"> </span><span style="color:#cccccc"> </span><span style="color:#cccccc"> </span><span style="color:#cccccc"> </span><span style="color:#cccccc"> </span><span style="color:#cccccc"> </span><span style="color:#cccccc"> </span><span style="color:#cccccc"> </span><span style="color:#cccccc"> </span><span style="color:#c586c0">return</span><span style="color:#cccccc"> </span><span style="color:#569cd6">true</span></div>
<div class="ln" style="top:719.5px;">22</div>
<div class="vl" style="top:719.5px"><span style="color:#cccccc"> </span><span style="color:#cccccc"> </span><span style="color:#cccccc"> </span><span style="color:#cccccc"> </span><span style="color:#cccccc"> </span><span style="color:#cccccc"> </span><span style="color:#cccccc"> </span><span style="color:#cccccc"> </span><span style="color:#cccccc"> </span><span style="color:#cccccc"> </span><span style="color:#cccccc"> </span><span style="color:#cccccc"> </span><span style="color:#c586c0">end</span></div>
<div class="ln" style="top:748.0px;">23</div>
<div class="vl" style="top:748.0px"><span style="color:#cccccc"> </span><span style="color:#cccccc"> </span><span style="color:#cccccc"> </span><span style="color:#cccccc"> </span><span style="color:#cccccc"> </span><span style="color:#cccccc"> </span><span style="color:#cccccc"> </span><span style="color:#cccccc"> </span><span style="color:#c586c0">end</span></div>
<div class="ln" style="top:776.5px;">24</div>
<div class="vl" style="top:776.5px"><span style="color:#cccccc"> </span><span style="color:#cccccc"> </span><span style="color:#cccccc"> </span><span style="color:#cccccc"> </span><span style="color:#cccccc"> </span><span style="color:#cccccc"> </span><span style="color:#cccccc"> </span><span style="color:#cccccc"> </span><span style="color:#c586c0">return</span><span style="color:#cccccc"> </span><span style="color:#569cd6">false</span></div>
<div class="ln" style="top:805.0px;">25</div>
<div class="vl" style="top:805.0px"><span style="color:#cccccc"> </span><span style="color:#cccccc"> </span><span style="color:#cccccc"> </span><span style="color:#cccccc"> </span><span style="color:#c586c0">end</span></div>
<div class="ln" style="top:833.5px;">26</div>
<div class="vl" style="top:833.5px"><span style="color:#c586c0">end</span></div>
<div class="ln" style="top:862.0px;">27</div>
<div class="ln" style="top:890.5px;">28</div>
<div class="vl" style="top:890.5px"><span style="color:#6a9955">-- IP<b class="k2">白</b><b class="k2">名</b><b class="k2">单</b><b class="k2">匹</b><b class="k2">配</b></span></div>
<div class="ln" style="top:919.0px;">29</div>
<div class="vl" style="top:919.0px"><span style="color:#c586c0">function</span><span style="color:#cccccc"> </span><span style="color:#9cdcfe">white_black</span><span style="color:#cccccc">.</span><span style="color:#dcdcaa">ip_white</span><span style="color:#ffd700">(</span><span style="color:#ffd700">)</span></div>
<div class="ln" style="top:947.5px;">30</div>
<div class="vl" style="top:947.5px"><span style="color:#cccccc"> </span><span style="color:#cccccc"> </span><span style="color:#cccccc"> </span><span style="color:#cccccc"> </span><span style="color:#569cd6">local</span><span style="color:#cccccc"> </span><span style="color:#9cdcfe">ip</span><span style="color:#cccccc"> </span><span style="color:#cccccc">=</span><span style="color:#cccccc"> </span><span style="color:#9cdcfe">ngx</span><span style="color:#cccccc">.</span><span style="color:#4ec9b0">ctx</span><span style="color:#cccccc">.</span><span style="color:#4ec9b0">ip</span></div>
<div class="ln" style="top:976.0px;">31</div>
<div class="vl" style="top:976.0px"><span style="color:#cccccc"> </span><span style="color:#cccccc"> </span><span style="color:#cccccc"> </span><span style="color:#cccccc"> </span><span style="color:#c586c0">if</span><span style="color:#cccccc"> </span><span style="color:#9cdcfe">ngx</span><span style="color:#cccccc">.</span><span style="color:#4ec9b0">ctx</span><span style="color:#cccccc">.</span><span style="color:#4ec9b0">ipv6</span><span style="color:#cccccc"> </span><span style="color:#cccccc">=</span><span style="color:#cccccc">=</span><span style="color:#cccccc"> </span><span style="color:#b5cea8">1</span><span style="color:#cccccc"> </span><span style="color:#cccccc">and</span><span style="color:#cccccc"> </span><span style="color:#9cdcfe">SAFEWAF_RULES</span><span style="color:#cccccc">.</span><span style="color:#4ec9b0">ipv6_white_count</span><span style="color:#cccccc"> </span><span style="color:#cccccc">&gt;</span><span style="color:#cccccc">=</span><span style="color:#cccccc"> </span><span style="color:#b5cea8">1</span><span style="color:#cccccc"> </span><span style="color:#c586c0">then</span></div>
<div class="ln" style="top:1004.5px;">32</div>
<div class="vl" style="top:1004.5px"><span style="color:#cccccc"> </span><span style="color:#cccccc"> </span><span style="color:#cccccc"> </span><span style="color:#cccccc"> </span><span style="color:#cccccc"> </span><span style="color:#cccccc"> </span><span style="color:#cccccc"> </span><span style="color:#cccccc"> </span><span style="color:#c586c0">if</span><span style="color:#cccccc"> </span><span style="color:#9cdcfe">SAFEWAF_RULES</span><span style="color:#cccccc">.</span><span style="color:#4ec9b0">ipv6_white</span><span style="color:#cccccc">:</span><span style="color:#dcdcaa">match</span><span style="color:#ffd700">(</span><span style="color:#9cdcfe">ip</span><span style="color:#ffd700">)</span><span style="color:#cccccc"> </span><span style="color:#c586c0">then</span></div>
<div class="ln" style="top:1033.0px;">33</div>
<div class="vl" style="top:1033.0px"><span style="color:#cccccc"> </span><span style="color:#cccccc"> </span><span style="color:#cccccc"> </span><span style="color:#cccccc"> </span><span style="color:#cccccc"> </span><span style="color:#cccccc"> </span><span style="color:#cccccc"> </span><span style="color:#cccccc"> </span><span style="color:#cccccc"> </span><span style="color:#cccccc"> </span><span style="color:#cccccc"> </span><span style="color:#cccccc"> </span><span style="color:#9cdcfe">Public</span><span style="color:#cccccc">.</span><span style="color:#dcdcaa">logs</span><span style="color:#ffd700">(</span><span style="color:#ce9178">'IPV6<b class="k2">白</b><b class="k2">名</b><b class="k2">单</b><b class="k2">：</b>'</span><span style="color:#cccccc"> </span><span style="color:#cccccc">.</span><span style="color:#cccccc">.</span><span style="color:#cccccc"> </span><span style="color:#9cdcfe">ip</span><span style="color:#ffd700">)</span></div>
<div class="ln" style="top:1061.5px;">34</div>
<div class="vl" style="top:1061.5px"><span style="color:#cccccc"> </span><span style="color:#cccccc"> </span><span style="color:#cccccc"> </span><span style="color:#cccccc"> </span><span style="color:#cccccc"> </span><span style="color:#cccccc"> </span><span style="color:#cccccc"> </span><span style="color:#cccccc"> </span><span style="color:#cccccc"> </span><span style="color:#cccccc"> </span><span style="color:#cccccc"> </span><span style="color:#cccccc"> </span><span style="color:#c586c0">return</span><span style="color:#cccccc"> </span><span style="color:#569cd6">true</span></div>
<div class="ln" style="top:1090.0px;">35</div>
<div class="vl" style="top:1090.0px"><span style="color:#cccccc"> </span><span style="color:#cccccc"> </span><span style="color:#cccccc"> </span><span style="color:#cccccc"> </span><span style="color:#cccccc"> </span><span style="color:#cccccc"> </span><span style="color:#cccccc"> </span><span style="color:#cccccc"> </span><span style="color:#c586c0">end</span></div>
<div class="ln" style="top:1118.5px;">36</div>
<div class="vl" style="top:1118.5px"><span style="color:#cccccc"> </span><span style="color:#cccccc"> </span><span style="color:#cccccc"> </span><span style="color:#cccccc"> </span><span style="color:#cccccc"> </span><span style="color:#cccccc"> </span><span style="color:#cccccc"> </span><span style="color:#cccccc"> </span><span style="color:#c586c0">return</span><span style="color:#cccccc"> </span><span style="color:#569cd6">false</span></div>
<svg class="a" style="left:722.2px;top:258.5px" width="34.7" height="6"><path d="M0.00 1 L5.75 5 L11.50 1 L17.25 5 L23.00 1 L28.75 5 L34.50 1 L40.25 5" fill="none" stroke="#cca700" stroke-width="1.3"/></svg>
<svg class="a" style="left:629.9px;top:287.0px" width="34.7" height="6"><path d="M0.00 1 L5.75 5 L11.50 1 L17.25 5 L23.00 1 L28.75 5 L34.50 1 L40.25 5" fill="none" stroke="#cca700" stroke-width="1.3"/></svg>
<svg class="a" style="left:1034.1px;top:315.5px" width="34.7" height="6"><path d="M0.00 1 L5.75 5 L11.50 1 L17.25 5 L23.00 1 L28.75 5 L34.50 1 L40.25 5" fill="none" stroke="#cca700" stroke-width="1.3"/></svg>
<svg class="a" style="left:722.2px;top:971.0px" width="34.7" height="6"><path d="M0.00 1 L5.75 5 L11.50 1 L17.25 5 L23.00 1 L28.75 5 L34.50 1 L40.25 5" fill="none" stroke="#cca700" stroke-width="1.3"/></svg>
<svg class="a" style="left:629.9px;top:999.5px" width="34.7" height="6"><path d="M0.00 1 L5.75 5 L11.50 1 L17.25 5 L23.00 1 L28.75 5 L34.50 1 L40.25 5" fill="none" stroke="#cca700" stroke-width="1.3"/></svg>
<div class="a" style="left:1294px;top:87px;width:3px;height:1063px;background:#252525"></div>
<div class="a" style="left:1294px;top:190px;width:3px;height:130px;background:#3a3a3a"></div>
</div>
<div id="br">
<div class="a" style="left:0;top:0;width:1263px;height:66px;background:#ffffff"></div>
<div class="a" style="left:-10px;top:-10px;width:22px;height:17px;border-radius:0 0 10px 0;background:#d3e3fd"></div>
<div class="a" style="left:307px;top:-10px;width:980px;height:18px;border-radius:0 0 0 10px;background:#d3e3fd"></div>
<svg class="a" style="left:18px;top:27px" width="20" height="20" viewBox="0 0 20 20"><path d="M17 10 H3.5 M9.5 3.5 L3 10 L9.5 16.5" fill="none" stroke="#474747" stroke-width="2"/></svg>
<svg class="a" style="left:63px;top:27px" width="20" height="20" viewBox="0 0 20 20"><path d="M3 10 H16.5 M10.5 3.5 L17 10 L10.5 16.5" fill="none" stroke="#a6a6a6" stroke-width="2"/></svg>
<svg class="a" style="left:107px;top:27px" width="20" height="20" viewBox="0 0 20 20"><path d="M16 10 A6.5 6.5 0 1 1 14 5.3" fill="none" stroke="#474747" stroke-width="2"/><path d="M11 5.8 H16.3 V0.5" fill="none" stroke="#474747" stroke-width="2"/></svg>
<div class="a" style="left:150px;top:16px;width:1106px;height:42px;border-radius:21px;background:#edf2fa"></div>
<div class="a" style="left:156px;top:22px;width:86px;height:30px;border-radius:15px;background:#ffffff"></div>
<svg class="a" style="left:163px;top:29px" width="18" height="16" viewBox="0 0 18 16"><path d="M9 1.5 L16.8 15 H1.2 Z" fill="none" stroke="#1f1f1f" stroke-width="1.7" stroke-linejoin="round"/><rect x="8.2" y="6" width="1.6" height="4.8" fill="#1f1f1f"/><rect x="8.2" y="11.8" width="1.6" height="1.6" fill="#1f1f1f"/></svg>
<div class="t" style="left:186px;top:30px;font-size:16px;color:#1f1f1f">不安全</div>
<div class="t" style="left:252px;top:28px;font-size:18.3px;color:#1f1f1f">192.168.1.72:8888/files</div>
<svg class="a" style="left:1216px;top:27px" width="22" height="22" viewBox="0 0 22 22"><path d="M11 2 L13.6 8 L20 8.5 L15.1 12.7 L16.6 19 L11 15.6 L5.4 19 L6.9 12.7 L2 8.5 L8.4 8 Z" fill="none" stroke="#474747" stroke-width="1.7" stroke-linejoin="round"/></svg>
<div class="a" style="left:0;top:66px;width:1263px;height:1px;background:#d0d0d0"></div>
<div class="a" style="left:0;top:67px;width:1263px;height:55px;background:#f7f7f7"></div>
<div class="t" style="left:25px;top:85px;font-size:18px;color:#333333">在线文本编辑器</div>
<div class="a" style="left:0;top:122px;width:1263px;height:38px;background:#575757"></div>
<svg class="a" style="left:19px;top:131px" width="20" height="20" viewBox="0 0 20 20"><path d="M2 9.5 L7.5 15 L18 3.5" fill="none" stroke="#ffffff" stroke-width="2.8"/></svg>
<div class="tbb" style="left:42px;top:122px">保存</div>
<div class="tbs" style="left:96px"></div>
<svg class="a" style="left:116px;top:131px" width="20" height="20" viewBox="0 0 20 20"><rect x="2.5" y="6" width="10.5" height="11" fill="none" stroke="#ffffff" stroke-width="1.6"/><path d="M6 6 V2.8 H17 V13.5 H13" fill="none" stroke="#ffffff" stroke-width="1.6"/></svg>
<div class="tbb" style="left:140px;top:122px">全部保存</div>
<div class="tbs" style="left:229px"></div>
<svg class="a" style="left:250px;top:131px" width="20" height="20" viewBox="0 0 20 20"><path d="M15.5 10 A6 6 0 1 1 13.3 5.2" fill="none" stroke="#ffffff" stroke-width="2"/><path d="M10.5 4.5 L15 4.8 L14.6 0.6" fill="none" stroke="#ffffff" stroke-width="1.8"/></svg>
<div class="tbb" style="left:272px;top:122px">刷新</div>
<div class="tbs" style="left:326px"></div>
<svg class="a" style="left:346px;top:131px" width="20" height="20" viewBox="0 0 20 20"><circle cx="9" cy="9" r="6.6" fill="none" stroke="#ffffff" stroke-width="1.9"/><path d="M13.5 13.5 L17.5 17.5" stroke="#ffffff" stroke-width="2"/></svg>
<div class="tbb" style="left:369px;top:122px">搜索</div>
<div class="tbs" style="left:423px"></div>
<svg class="a" style="left:443px;top:131px" width="20" height="20" viewBox="0 0 20 20"><path d="M3 2.5 H12 V7 M3 2.5 V17.5 H9 M3 7.5 H8.5 M3 12 H7" fill="none" stroke="#ffffff" stroke-width="1.7"/><circle cx="12.8" cy="12" r="3" fill="none" stroke="#ffffff" stroke-width="1.6"/><path d="M15 14.2 L17.5 16.7" stroke="#ffffff" stroke-width="1.7"/></svg>
<div class="tbb" style="left:466px;top:122px">替换</div>
<div class="tbs" style="left:520px"></div>
<svg class="a" style="left:541px;top:131px" width="20" height="20" viewBox="0 0 20 20"><circle cx="10" cy="7" r="4.4" fill="none" stroke="#ffffff" stroke-width="1.6"/><circle cx="10" cy="7" r="1.3" fill="#ffffff"/><path d="M6.8 10.5 L10 14.5 L13.2 10.5 M6 13.5 Q2.5 14.5 2.5 16 Q2.5 18 10 18 Q17.5 18 17.5 16 Q17.5 14.5 14 13.5" fill="none" stroke="#ffffff" stroke-width="1.5"/></svg>
<div class="tbb" style="left:563px;top:122px">跳转行</div>
<div class="tbs" style="left:636px"></div>
<svg class="a" style="left:656px;top:131px" width="20" height="20" viewBox="0 0 20 20"><rect x="2" y="3" width="16" height="14" fill="none" stroke="#ffffff" stroke-width="1.6"/><path d="M2 6 H18" stroke="#ffffff" stroke-width="1.2"/><path d="M5 9 L8 11.5 L5 14 M9 14 H14" fill="none" stroke="#ffffff" stroke-width="1.4"/></svg>
<div class="tbb" style="left:678px;top:122px">字体大小</div>
<div class="tbs" style="left:767px"></div>
<svg class="a" style="left:786px;top:131px" width="20" height="20" viewBox="0 0 20 20"><path d="M2.5 5 H15.5 M2.5 10 H15.5 M2.5 15 H15.5" stroke="#ffffff" stroke-width="1.9"/></svg>
<div class="tbb" style="left:810px;top:122px">主题</div>
<div class="tbs" style="left:865px"></div>
<svg class="a" style="left:885px;top:131px" width="20" height="20" viewBox="0 0 20 20"><path d="M16.15 8.63 L18.13 8.94 L18.13 11.06 L16.15 11.37 L15.32 13.38 L16.50 15.00 L15.00 16.50 L13.38 15.32 L11.37 16.15 L11.06 18.13 L8.94 18.13 L8.63 16.15 L6.62 15.32 L5.00 16.50 L3.50 15.00 L4.68 13.38 L3.85 11.37 L1.87 11.06 L1.87 8.94 L3.85 8.63 L4.68 6.62 L3.50 5.00 L5.00 3.50 L6.62 4.68 L8.63 3.85 L8.94 1.87 L11.06 1.87 L11.37 3.85 L13.38 4.68 L15.00 3.50 L16.50 5.00 L15.32 6.62 Z" fill="none" stroke="#ffffff" stroke-width="1.5" stroke-linejoin="round"/><circle cx="10" cy="10" r="2.7" fill="none" stroke="#ffffff" stroke-width="1.5"/></svg>
<div class="tbb" style="left:907px;top:122px">设置</div>
<div class="tbs" style="left:962px"></div>
<svg class="a" style="left:982px;top:131px" width="20" height="20" viewBox="0 0 20 20"><circle cx="10" cy="10" r="8.3" fill="#ffffff"/><path d="M7.4 7.6 Q7.4 4.8 10 4.8 Q12.6 4.8 12.6 7.3 Q12.6 8.8 10.8 9.7 Q10 10.2 10 11.6" fill="none" stroke="#575757" stroke-width="1.7"/><circle cx="10" cy="14.3" r="1.1" fill="#575757"/></svg>
<div class="tbb" style="left:1005px;top:122px">快捷键</div>
<div class="tbs" style="left:1077px"></div>
<div class="a" style="left:0;top:160px;width:325px;height:50px;background:#333333"></div>
<div class="t" style="left:20px;top:176px;font-size:18px;color:#ffffff">目录</div><div class="t" style="left:55px;top:175px;font-size:20px;color:#ffffff">:</div><div class="t" style="left:71px;top:175px;font-size:20px;color:#ffffff">/www/server/btwaf</div>
<div class="a" style="left:0;top:210px;width:325px;height:37px;background:#575757"></div>
<svg class="a" style="left:12px;top:221px" width="14" height="16" viewBox="0 0 14 16"><path d="M7 15 V2 M2 7 L7 2 L12 7" fill="none" stroke="#fff" stroke-width="1.6"/></svg>
<div class="stb" style="left:31px">上一级</div>
<svg class="a" style="left:106px;top:221px" width="14" height="14" viewBox="0 0 20 20"><path d="M15.5 10 A6 6 0 1 1 13.3 5.2" fill="none" stroke="#fff" stroke-width="2.6"/><path d="M10.5 4.5 L15 4.8 L14.6 0.6" fill="none" stroke="#fff" stroke-width="2.4"/></svg>
<div class="stb" style="left:125px">刷新</div>
<svg class="a" style="left:185px;top:221px" width="15" height="15" viewBox="0 0 15 15"><path d="M7.5 1 V14 M1 7.5 H14" stroke="#fff" stroke-width="1.5"/></svg>
<div class="stb" style="left:205px">新建</div>
<svg class="a" style="left:264px;top:221px" width="15" height="15" viewBox="0 0 20 20"><circle cx="9" cy="9" r="6.8" fill="none" stroke="#fff" stroke-width="2.3"/><path d="M13.5 13.5 L18 18" stroke="#fff" stroke-width="2.4"/></svg>
<div class="stb" style="left:285px">搜索</div>
<div class="a" style="left:0;top:247px;width:314px;height:903px;background:#222222"></div>
<div class="a" style="left:314px;top:247px;width:11px;height:903px;background:#2c2c2c"></div>
<div class="a" style="left:314px;top:247px;width:11px;height:512px;background:#3e424b"></div>
<svg class="a" style="left:18px;top:263.0px" width="8" height="12" viewBox="0 0 8 12"><path d="M1.5 1.5 L6.5 6 L1.5 10.5 Z" fill="#bbbbbb"/></svg>
<svg class="a" style="left:36px;top:260.0px" width="19" height="17" viewBox="0 0 19 17"><path d="M0.5 2 Q0.5 0.5 2 0.5 H7 L9 2.8 H17 Q18.5 2.8 18.5 4.3 V15 Q18.5 16.5 17 16.5 H2 Q0.5 16.5 0.5 15 Z" fill="#e8bd4b"/><path d="M0.5 5 H18.5" stroke="#d9a935" stroke-width="1"/></svg>
<div class="ft" style="left:64px;top:254.0px">html</div>
<svg class="a" style="left:18px;top:295.5px" width="8" height="12" viewBox="0 0 8 12"><path d="M1.5 1.5 L6.5 6 L1.5 10.5 Z" fill="#bbbbbb"/></svg>
<svg class="a" style="left:36px;top:292.5px" width="19" height="17" viewBox="0 0 19 17"><path d="M0.5 2 Q0.5 0.5 2 0.5 H7 L9 2.8 H17 Q18.5 2.8 18.5 4.3 V15 Q18.5 16.5 17 16.5 H2 Q0.5 16.5 0.5 15 Z" fill="#e8bd4b"/><path d="M0.5 5 H18.5" stroke="#d9a935" stroke-width="1"/></svg>
<div class="ft" style="left:64px;top:286.5px">inc</div>
<svg class="a" style="left:18px;top:328.0px" width="8" height="12" viewBox="0 0 8 12"><path d="M1.5 1.5 L6.5 6 L1.5 10.5 Z" fill="#bbbbbb"/></svg>
<svg class="a" style="left:36px;top:325.0px" width="19" height="17" viewBox="0 0 19 17"><path d="M0.5 2 Q0.5 0.5 2 0.5 H7 L9 2.8 H17 Q18.5 2.8 18.5 4.3 V15 Q18.5 16.5 17 16.5 H2 Q0.5 16.5 0.5 15 Z" fill="#e8bd4b"/><path d="M0.5 5 H18.5" stroke="#d9a935" stroke-width="1"/></svg>
<div class="ft" style="left:64px;top:319.0px">lib</div>
<svg class="a" style="left:18px;top:360.5px" width="8" height="12" viewBox="0 0 8 12"><path d="M1.5 1.5 L6.5 6 L1.5 10.5 Z" fill="#bbbbbb"/></svg>
<svg class="a" style="left:36px;top:357.5px" width="19" height="17" viewBox="0 0 19 17"><path d="M0.5 2 Q0.5 0.5 2 0.5 H7 L9 2.8 H17 Q18.5 2.8 18.5 4.3 V15 Q18.5 16.5 17 16.5 H2 Q0.5 16.5 0.5 15 Z" fill="#e8bd4b"/><path d="M0.5 5 H18.5" stroke="#d9a935" stroke-width="1"/></svg>
<div class="ft" style="left:64px;top:351.5px">lua515</div>
<svg class="a" style="left:15px;top:396.0px" width="12" height="8" viewBox="0 0 12 8"><path d="M1.5 1.5 L10.5 1.5 L6 6.5 Z" fill="#bbbbbb"/></svg>
<svg class="a" style="left:36px;top:390.0px" width="19" height="17" viewBox="0 0 19 17"><path d="M0.5 2 Q0.5 0.5 2 0.5 H7 L9 2.8 H17 Q18.5 2.8 18.5 4.3 V15 Q18.5 16.5 17 16.5 H2 Q0.5 16.5 0.5 15 Z" fill="#e8bd4b"/><path d="M0.5 5 H18.5" stroke="#d9a935" stroke-width="1"/></svg>
<div class="ft" style="left:64px;top:384.0px">modules</div>
<svg class="a" style="left:58px;top:421.5px" width="20" height="20" viewBox="0 0 20 20"><circle cx="9" cy="11" r="8.4" fill="none" stroke="#e0e0e0" stroke-width="0.8" stroke-dasharray="1 1"/><circle cx="9" cy="11" r="7.2" fill="#e0e0e0"/><circle cx="11" cy="9" r="1.9" fill="#222"/><circle cx="16.4" cy="3.4" r="2" fill="#e0e0e0"/></svg>
<div class="ft" style="left:86px;top:416.5px;color:#dddddd">args.lua</div>
<svg class="a" style="left:58px;top:454.0px" width="20" height="20" viewBox="0 0 20 20"><circle cx="9" cy="11" r="8.4" fill="none" stroke="#e0e0e0" stroke-width="0.8" stroke-dasharray="1 1"/><circle cx="9" cy="11" r="7.2" fill="#e0e0e0"/><circle cx="11" cy="9" r="1.9" fill="#222"/><circle cx="16.4" cy="3.4" r="2" fill="#e0e0e0"/></svg>
<div class="ft" style="left:86px;top:449.0px;color:#dddddd">cc.lua</div>
<svg class="a" style="left:58px;top:486.5px" width="20" height="20" viewBox="0 0 20 20"><circle cx="9" cy="11" r="8.4" fill="none" stroke="#e0e0e0" stroke-width="0.8" stroke-dasharray="1 1"/><circle cx="9" cy="11" r="7.2" fill="#e0e0e0"/><circle cx="11" cy="9" r="1.9" fill="#222"/><circle cx="16.4" cy="3.4" r="2" fill="#e0e0e0"/></svg>
<div class="ft" style="left:86px;top:481.5px;color:#dddddd">city.lua</div>
<svg class="a" style="left:58px;top:519.0px" width="20" height="20" viewBox="0 0 20 20"><circle cx="9" cy="11" r="8.4" fill="none" stroke="#e0e0e0" stroke-width="0.8" stroke-dasharray="1 1"/><circle cx="9" cy="11" r="7.2" fill="#e0e0e0"/><circle cx="11" cy="9" r="1.9" fill="#222"/><circle cx="16.4" cy="3.4" r="2" fill="#e0e0e0"/></svg>
<div class="ft" style="left:86px;top:514.0px;color:#dddddd">cookie.lua</div>
<svg class="a" style="left:58px;top:551.5px" width="20" height="20" viewBox="0 0 20 20"><circle cx="9" cy="11" r="8.4" fill="none" stroke="#e0e0e0" stroke-width="0.8" stroke-dasharray="1 1"/><circle cx="9" cy="11" r="7.2" fill="#e0e0e0"/><circle cx="11" cy="9" r="1.9" fill="#222"/><circle cx="16.4" cy="3.4" r="2" fill="#e0e0e0"/></svg>
<div class="ft" style="left:86px;top:546.5px;color:#dddddd">customize.lua</div>
<svg class="a" style="left:58px;top:584.0px" width="20" height="20" viewBox="0 0 20 20"><circle cx="9" cy="11" r="8.4" fill="none" stroke="#e0e0e0" stroke-width="0.8" stroke-dasharray="1 1"/><circle cx="9" cy="11" r="7.2" fill="#e0e0e0"/><circle cx="11" cy="9" r="1.9" fill="#222"/><circle cx="16.4" cy="3.4" r="2" fill="#e0e0e0"/></svg>
<div class="ft" style="left:86px;top:579.0px;color:#dddddd">decode.lua</div>
<svg class="a" style="left:58px;top:616.5px" width="20" height="20" viewBox="0 0 20 20"><circle cx="9" cy="11" r="8.4" fill="none" stroke="#e0e0e0" stroke-width="0.8" stroke-dasharray="1 1"/><circle cx="9" cy="11" r="7.2" fill="#e0e0e0"/><circle cx="11" cy="9" r="1.9" fill="#222"/><circle cx="16.4" cy="3.4" r="2" fill="#e0e0e0"/></svg>
<div class="ft" style="left:86px;top:611.5px;color:#dddddd">error_info.lua</div>
<svg class="a" style="left:58px;top:649.0px" width="20" height="20" viewBox="0 0 20 20"><circle cx="9" cy="11" r="8.4" fill="none" stroke="#e0e0e0" stroke-width="0.8" stroke-dasharray="1 1"/><circle cx="9" cy="11" r="7.2" fill="#e0e0e0"/><circle cx="11" cy="9" r="1.9" fill="#222"/><circle cx="16.4" cy="3.4" r="2" fill="#e0e0e0"/></svg>
<div class="ft" style="left:86px;top:644.0px;color:#dddddd">header.lua</div>
<svg class="a" style="left:58px;top:681.5px" width="20" height="20" viewBox="0 0 20 20"><circle cx="9" cy="11" r="8.4" fill="none" stroke="#e0e0e0" stroke-width="0.8" stroke-dasharray="1 1"/><circle cx="9" cy="11" r="7.2" fill="#e0e0e0"/><circle cx="11" cy="9" r="1.9" fill="#222"/><circle cx="16.4" cy="3.4" r="2" fill="#e0e0e0"/></svg>
<div class="ft" style="left:86px;top:676.5px;color:#dddddd">idc.lua</div>
<svg class="a" style="left:58px;top:714.0px" width="20" height="20" viewBox="0 0 20 20"><circle cx="9" cy="11" r="8.4" fill="none" stroke="#e0e0e0" stroke-width="0.8" stroke-dasharray="1 1"/><circle cx="9" cy="11" r="7.2" fill="#e0e0e0"/><circle cx="11" cy="9" r="1.9" fill="#222"/><circle cx="16.4" cy="3.4" r="2" fill="#e0e0e0"/></svg>
<div class="ft" style="left:86px;top:709.0px;color:#dddddd">jdbc.lua</div>
<svg class="a" style="left:58px;top:746.5px" width="20" height="20" viewBox="0 0 20 20"><circle cx="9" cy="11" r="8.4" fill="none" stroke="#e0e0e0" stroke-width="0.8" stroke-dasharray="1 1"/><circle cx="9" cy="11" r="7.2" fill="#e0e0e0"/><circle cx="11" cy="9" r="1.9" fill="#222"/><circle cx="16.4" cy="3.4" r="2" fill="#e0e0e0"/></svg>
<div class="ft" style="left:86px;top:741.5px;color:#dddddd">limit_user.lua</div>
<svg class="a" style="left:58px;top:779.0px" width="20" height="20" viewBox="0 0 20 20"><circle cx="9" cy="11" r="8.4" fill="none" stroke="#e0e0e0" stroke-width="0.8" stroke-dasharray="1 1"/><circle cx="9" cy="11" r="7.2" fill="#e0e0e0"/><circle cx="11" cy="9" r="1.9" fill="#222"/><circle cx="16.4" cy="3.4" r="2" fill="#e0e0e0"/></svg>
<div class="ft" style="left:86px;top:774.0px;color:#dddddd">malicious_ip.lua</div>
<svg class="a" style="left:58px;top:811.5px" width="20" height="20" viewBox="0 0 20 20"><circle cx="9" cy="11" r="8.4" fill="none" stroke="#e0e0e0" stroke-width="0.8" stroke-dasharray="1 1"/><circle cx="9" cy="11" r="7.2" fill="#e0e0e0"/><circle cx="11" cy="9" r="1.9" fill="#222"/><circle cx="16.4" cy="3.4" r="2" fill="#e0e0e0"/></svg>
<div class="ft" style="left:86px;top:806.5px;color:#dddddd">nday.lua</div>
<svg class="a" style="left:58px;top:844.0px" width="20" height="20" viewBox="0 0 20 20"><circle cx="9" cy="11" r="8.4" fill="none" stroke="#e0e0e0" stroke-width="0.8" stroke-dasharray="1 1"/><circle cx="9" cy="11" r="7.2" fill="#e0e0e0"/><circle cx="11" cy="9" r="1.9" fill="#222"/><circle cx="16.4" cy="3.4" r="2" fill="#e0e0e0"/></svg>
<div class="ft" style="left:86px;top:839.0px;color:#dddddd">post.lua</div>
<svg class="a" style="left:58px;top:876.5px" width="20" height="20" viewBox="0 0 20 20"><circle cx="9" cy="11" r="8.4" fill="none" stroke="#e0e0e0" stroke-width="0.8" stroke-dasharray="1 1"/><circle cx="9" cy="11" r="7.2" fill="#e0e0e0"/><circle cx="11" cy="9" r="1.9" fill="#222"/><circle cx="16.4" cy="3.4" r="2" fill="#e0e0e0"/></svg>
<div class="ft" style="left:86px;top:871.5px;color:#dddddd">re_api.lua</div>
<svg class="a" style="left:58px;top:909.0px" width="20" height="20" viewBox="0 0 20 20"><circle cx="9" cy="11" r="8.4" fill="none" stroke="#e0e0e0" stroke-width="0.8" stroke-dasharray="1 1"/><circle cx="9" cy="11" r="7.2" fill="#e0e0e0"/><circle cx="11" cy="9" r="1.9" fill="#222"/><circle cx="16.4" cy="3.4" r="2" fill="#e0e0e0"/></svg>
<div class="ft" style="left:86px;top:904.0px;color:#dddddd">readonly.lua</div>
<svg class="a" style="left:58px;top:941.5px" width="20" height="20" viewBox="0 0 20 20"><circle cx="9" cy="11" r="8.4" fill="none" stroke="#e0e0e0" stroke-width="0.8" stroke-dasharray="1 1"/><circle cx="9" cy="11" r="7.2" fill="#e0e0e0"/><circle cx="11" cy="9" r="1.9" fill="#222"/><circle cx="16.4" cy="3.4" r="2" fill="#e0e0e0"/></svg>
<div class="ft" style="left:86px;top:936.5px;color:#dddddd">request_check.lua</div>
<svg class="a" style="left:58px;top:974.0px" width="20" height="20" viewBox="0 0 20 20"><circle cx="9" cy="11" r="8.4" fill="none" stroke="#e0e0e0" stroke-width="0.8" stroke-dasharray="1 1"/><circle cx="9" cy="11" r="7.2" fill="#e0e0e0"/><circle cx="11" cy="9" r="1.9" fill="#222"/><circle cx="16.4" cy="3.4" r="2" fill="#e0e0e0"/></svg>
<div class="ft" style="left:86px;top:969.0px;color:#dddddd">scan_black.lua</div>
<svg class="a" style="left:58px;top:1006.5px" width="20" height="20" viewBox="0 0 20 20"><circle cx="9" cy="11" r="8.4" fill="none" stroke="#e0e0e0" stroke-width="0.8" stroke-dasharray="1 1"/><circle cx="9" cy="11" r="7.2" fill="#e0e0e0"/><circle cx="11" cy="9" r="1.9" fill="#222"/><circle cx="16.4" cy="3.4" r="2" fill="#e0e0e0"/></svg>
<div class="ft" style="left:86px;top:1001.5px;color:#dddddd">smart_cc.lua</div>
<svg class="a" style="left:58px;top:1039.0px" width="20" height="20" viewBox="0 0 20 20"><circle cx="9" cy="11" r="8.4" fill="none" stroke="#e0e0e0" stroke-width="0.8" stroke-dasharray="1 1"/><circle cx="9" cy="11" r="7.2" fill="#e0e0e0"/><circle cx="11" cy="9" r="1.9" fill="#222"/><circle cx="16.4" cy="3.4" r="2" fill="#e0e0e0"/></svg>
<div class="ft" style="left:86px;top:1034.0px;color:#dddddd">upload.lua</div>
<svg class="a" style="left:58px;top:1071.5px" width="20" height="20" viewBox="0 0 20 20"><circle cx="9" cy="11" r="8.4" fill="none" stroke="#e0e0e0" stroke-width="0.8" stroke-dasharray="1 1"/><circle cx="9" cy="11" r="7.2" fill="#e0e0e0"/><circle cx="11" cy="9" r="1.9" fill="#222"/><circle cx="16.4" cy="3.4" r="2" fill="#e0e0e0"/></svg>
<div class="ft" style="left:86px;top:1066.5px;color:#dddddd">user_agent.lua</div>
<svg class="a" style="left:58px;top:1104.0px" width="20" height="20" viewBox="0 0 20 20"><circle cx="9" cy="11" r="8.4" fill="none" stroke="#e0e0e0" stroke-width="0.8" stroke-dasharray="1 1"/><circle cx="9" cy="11" r="7.2" fill="#e0e0e0"/><circle cx="11" cy="9" r="1.9" fill="#222"/><circle cx="16.4" cy="3.4" r="2" fill="#e0e0e0"/></svg>
<div class="ft" style="left:86px;top:1099.0px;color:#e6b422">white_balck.lua</div>
<svg class="a" style="left:18px;top:1140.5px" width="8" height="12" viewBox="0 0 8 12"><path d="M1.5 1.5 L6.5 6 L1.5 10.5 Z" fill="#bbbbbb"/></svg>
<svg class="a" style="left:36px;top:1137.5px" width="19" height="17" viewBox="0 0 19 17"><path d="M0.5 2 Q0.5 0.5 2 0.5 H7 L9 2.8 H17 Q18.5 2.8 18.5 4.3 V15 Q18.5 16.5 17 16.5 H2 Q0.5 16.5 0.5 15 Z" fill="#e8bd4b"/><path d="M0.5 5 H18.5" stroke="#d9a935" stroke-width="1"/></svg>
<div class="ft" style="left:64px;top:1131.5px">new_logs</div>
<div class="a" style="left:325px;top:215px;width:938px;height:935px;background:#272822"></div>
<div class="a" style="left:325px;top:215px;width:71px;height:935px;background:#2f3129"></div>
<div class="a" style="left:325px;top:371px;width:71px;height:20px;background:#272727"></div>
<div class="a" style="left:396px;top:371px;width:867px;height:20px;background:#202020"></div>
<div class="a" style="left:601.6px;top:371px;width:76.8px;height:20px;background:#767676"></div>
<div class="a" style="left:678.4px;top:371px;width:19.2px;height:20px;border:1px solid #55554d;border-radius:2px"></div>
<div class="a" style="left:755.2px;top:611px;width:76.8px;height:20px;border:1px solid #e6db00"></div>
<div class="a" style="left:793.6px;top:631px;width:76.8px;height:20px;border:1px solid #e6db00"></div>
<div class="an" style="top:211px">100</div>
<div class="al" style="left:400px;top:211px"><span style="color:#f92672">end</span><span class="eol">¬</span></div>
<div class="an" style="top:231px">101</div>
<div class="al" style="left:400px;top:231px"><span class="eol">¬</span></div>
<div class="an" style="top:251px">102</div>
<svg class="a" style="left:384px;top:258px" width="9" height="6" viewBox="0 0 9 6"><path d="M0.5 0.5 H8.5 L4.5 5.5 Z" fill="#75756f"/></svg>
<div class="al" style="left:400px;top:251px"><span style="color:#f92672">function</span><span class="sp">·</span><span style="color:#f8f8f2">white_balck</span><span style="color:#f8f8f2">.</span><span style="color:#f8f8f2">header_drop</span><span style="color:#f8f8f2">(</span><span style="color:#f8f8f2">ip</span><span style="color:#f8f8f2">)</span><span class="eol">¬</span></div>
<div class="an" style="top:271px">103</div>
<div class="al" style="left:400px;top:271px"><span class="tb" style="width:38.4px"></span><span style="color:#f92672">local</span><span class="sp">·</span><span style="color:#f8f8f2">count</span><span style="color:#f8f8f2">,</span><span style="color:#f8f8f2">_</span><span class="sp">·</span><span style="color:#f92672">=</span><span class="sp">·</span><span style="color:#f8f8f2">ngx</span><span style="color:#f8f8f2">.</span><span style="color:#f8f8f2">shared</span><span style="color:#f8f8f2">.</span><span style="color:#f8f8f2">drop_ip</span><span style="color:#f92672">:</span><span style="color:#f8f8f2">get</span><span style="color:#f8f8f2">(</span><span style="color:#f8f8f2">ip</span><span style="color:#f8f8f2">)</span><span class="eol">¬</span></div>
<div class="an" style="top:291px">104</div>
<div class="al" style="left:400px;top:291px"><span class="tb" style="width:38.4px"></span><span style="color:#f92672">if</span><span class="sp">·</span><span style="color:#f92672">not</span><span class="sp">·</span><span style="color:#f8f8f2">count</span><span class="sp">·</span><span style="color:#f92672">then</span><span class="sp">·</span><span style="color:#f92672">return</span><span class="sp">·</span><span style="color:#ae81ff">false</span><span class="sp">·</span><span style="color:#f92672">end</span><span class="eol">¬</span></div>
<div class="an" style="top:311px">105</div>
<div class="al" style="left:400px;top:311px"><span class="sp">·</span><span class="sp">·</span><span class="sp">·</span><span class="sp">·</span><span style="color:#f92672">return</span><span class="sp">·</span><span style="color:#ae81ff">true</span><span class="eol">¬</span></div>
<div class="an" style="top:331px">106</div>
<div class="al" style="left:400px;top:331px"><span style="color:#f92672">end</span><span class="eol">¬</span></div>
<div class="an" style="top:351px">107</div>
<div class="al" style="left:400px;top:351px"><span class="eol">¬</span></div>
<div class="an" style="top:371px">108</div>
<svg class="a" style="left:384px;top:378px" width="9" height="6" viewBox="0 0 9 6"><path d="M0.5 0.5 H8.5 L4.5 5.5 Z" fill="#75756f"/></svg>
<div class="al" style="left:400px;top:371px"><span style="color:#f92672">function</span><span class="sp">·</span><span style="color:#f8f8f2">white_balck</span><span style="color:#f8f8f2">.</span><span style="color:#f8f8f2">ip_black</span><span style="color:#f8f8f2">(</span><span style="color:#f8f8f2">)</span><span class="eol">¬</span></div>
<div class="an" style="top:391px">109</div>
<div class="al" style="left:400px;top:391px"><span class="sp">·</span><span class="sp">·</span><span class="sp">·</span><span class="sp">·</span><span style="color:#f92672">local</span><span class="sp">·</span><span style="color:#f8f8f2">ip</span><span style="color:#f92672">=</span><span style="color:#f8f8f2">ngx</span><span style="color:#f8f8f2">.</span><span style="color:#f8f8f2">ctx</span><span style="color:#f8f8f2">.</span><span style="color:#f8f8f2">ip</span><span class="eol">¬</span></div>
<div class="an" style="top:411px">110</div>
<svg class="a" style="left:384px;top:418px" width="9" height="6" viewBox="0 0 9 6"><path d="M0.5 0.5 H8.5 L4.5 5.5 Z" fill="#75756f"/></svg>
<div class="al" style="left:400px;top:411px"><span class="sp">·</span><span class="sp">·</span><span class="sp">·</span><span class="sp">·</span><span style="color:#f92672">if</span><span class="sp">·</span><span style="color:#f8f8f2">ngx</span><span style="color:#f8f8f2">.</span><span style="color:#f8f8f2">ctx</span><span style="color:#f8f8f2">.</span><span style="color:#f8f8f2">ipv6</span><span style="color:#f92672">=</span><span style="color:#f92672">=</span><span style="color:#ae81ff">1</span><span class="sp">·</span><span style="color:#f92672">and</span><span class="sp">·</span><span style="color:#f8f8f2">BTWAF_RULES</span><span style="color:#f8f8f2">.</span><span style="color:#f8f8f2">ipv6_black_count</span><span style="color:#f92672">&gt;</span><span style="color:#f92672">=</span><span style="color:#ae81ff">1</span><span class="sp">·</span><span style="color:#f92672">then</span><span class="sp">·</span><span class="eol">¬</span></div>
<div class="an" style="top:431px">111</div>
<svg class="a" style="left:384px;top:438px" width="9" height="6" viewBox="0 0 9 6"><path d="M0.5 0.5 H8.5 L4.5 5.5 Z" fill="#75756f"/></svg>
<div class="a" style="left:438.4px;top:431px;width:1px;height:20px;background:repeating-linear-gradient(#45453f 0 2px,transparent 2px 5px)"></div>
<div class="al" style="left:400px;top:431px"><span class="sp">·</span><span class="sp">·</span><span class="sp">·</span><span class="sp">·</span><span class="sp">·</span><span class="sp">·</span><span class="sp">·</span><span class="sp">·</span><span style="color:#f92672">if</span><span class="sp">·</span><span style="color:#f8f8f2">BTWAF_RULES</span><span style="color:#f8f8f2">.</span><span style="color:#f8f8f2">ipv6_black</span><span style="color:#f92672">:</span><span style="color:#66d9ef">match</span><span style="color:#f8f8f2">(</span><span style="color:#f8f8f2">ngx</span><span style="color:#f8f8f2">.</span><span style="color:#f8f8f2">ctx</span><span style="color:#f8f8f2">.</span><span style="color:#f8f8f2">ip</span><span style="color:#f8f8f2">)</span><span class="sp">·</span><span style="color:#f92672">then</span><span class="eol">¬</span></div>
<div class="an" style="top:451px">112</div>
<div class="a" style="left:438.4px;top:451px;width:1px;height:20px;background:repeating-linear-gradient(#45453f 0 2px,transparent 2px 5px)"></div>
<div class="a" style="left:476.8px;top:451px;width:1px;height:20px;background:repeating-linear-gradient(#45453f 0 2px,transparent 2px 5px)"></div>
<div class="al" style="left:400px;top:451px"><span class="sp">·</span><span class="sp">·</span><span class="sp">·</span><span class="sp">·</span><span class="sp">·</span><span class="sp">·</span><span class="sp">·</span><span class="sp">·</span><span class="sp">·</span><span class="sp">·</span><span class="sp">·</span><span class="sp">·</span><span style="color:#f8f8f2">Public</span><span style="color:#f8f8f2">.</span><span style="color:#f8f8f2">log_rule_hit</span><span style="color:#f8f8f2">(</span><span style="color:#ae81ff">1</span><span style="color:#f8f8f2">,</span><span style="color:#e6db74">"IP</span><b class="a2" style="color:#e6db74">黑</b><b class="a2" style="color:#e6db74">名</b><b class="a2" style="color:#e6db74">单</b><span style="color:#e6db74">"</span><span style="color:#f8f8f2">,</span><span style="color:#f8f8f2">ngx</span><span style="color:#f8f8f2">.</span><span style="color:#f8f8f2">ctx</span><span style="color:#f8f8f2">.</span><span style="color:#66d9ef">time</span><span style="color:#f8f8f2">,</span><span class="sp">·</span><span style="color:#e6db74">"IP</span><b class="a2" style="color:#e6db74">黑</b><b class="a2" style="color:#e6db74">名</b><b class="a2" style="color:#e6db74">单</b><span style="color:#e6db74">"</span><span style="color:#f8f8f2">,</span><span class="sp">·</span><span style="color:#e6db74">"</span><b class="a2" style="color:#e6db74">匹</b><b class="a2" style="color:#e6db74">配</b><b class="a2" style="color:#e6db74">到</b><span style="color:#e6db74">IP</span><b class="a2" style="color:#e6db74">黑</b><b class="a2" style="color:#e6db74">名</b><b class="a2" style="color:#e6db74">单</b><span style="color:#e6db74">"</span><span style="color:#f92672">..</span><span style="color:#f8f8f2">ngx</span><span style="color:#f8f8f2">.</span><span style="color:#f8f8f2">ctx</span><span style="color:#f8f8f2">.</span><span style="color:#f8f8f2">ip</span><span style="color:#f8f8f2">)</span><span class="eol">¬</span></div>
<div class="an" style="top:471px">113</div>
<div class="a" style="left:438.4px;top:471px;width:1px;height:20px;background:repeating-linear-gradient(#45453f 0 2px,transparent 2px 5px)"></div>
<div class="a" style="left:476.8px;top:471px;width:1px;height:20px;background:repeating-linear-gradient(#45453f 0 2px,transparent 2px 5px)"></div>
<div class="al" style="left:400px;top:471px"><span class="sp">·</span><span class="sp">·</span><span class="sp">·</span><span class="sp">·</span><span class="sp">·</span><span class="sp">·</span><span class="sp">·</span><span class="sp">·</span><span class="sp">·</span><span class="sp">·</span><span class="sp">·</span><span class="sp">·</span><span style="color:#f8f8f2">ngx</span><span style="color:#f8f8f2">.</span><span style="color:#f8f8f2">var</span><span style="color:#f8f8f2">.</span><span style="color:#f8f8f2">waf2monitor_blocked</span><span style="color:#f92672">=</span><span style="color:#e6db74">"IP</span><b class="a2" style="color:#e6db74">黑</b><b class="a2" style="color:#e6db74">名</b><b class="a2" style="color:#e6db74">单</b><span style="color:#e6db74">"</span><span class="eol">¬</span></div>
<div class="an" style="top:491px">114</div>
<div class="a" style="left:438.4px;top:491px;width:1px;height:20px;background:repeating-linear-gradient(#45453f 0 2px,transparent 2px 5px)"></div>
<div class="a" style="left:476.8px;top:491px;width:1px;height:20px;background:repeating-linear-gradient(#45453f 0 2px,transparent 2px 5px)"></div>
<div class="al" style="left:400px;top:491px"><span class="tb" style="width:38.4px"></span><span class="tb" style="width:38.4px"></span><span class="tb" style="width:38.4px"></span><span style="color:#f8f8f2">IpInfo</span><span style="color:#f8f8f2">.</span><span style="color:#f8f8f2">bt_ip_filter</span><span style="color:#f8f8f2">(</span><span style="color:#f8f8f2">ip</span><span style="color:#f8f8f2">,</span><span style="color:#ae81ff">86400</span><span style="color:#f8f8f2">)</span><span class="eol">¬</span></div>
<div class="an" style="top:511px">115</div>
<div class="a" style="left:438.4px;top:511px;width:1px;height:20px;background:repeating-linear-gradient(#45453f 0 2px,transparent 2px 5px)"></div>
<div class="a" style="left:476.8px;top:511px;width:1px;height:20px;background:repeating-linear-gradient(#45453f 0 2px,transparent 2px 5px)"></div>
<div class="al" style="left:400px;top:511px"><span class="tb" style="width:38.4px"></span><span class="tb" style="width:38.4px"></span><span class="tb" style="width:38.4px"></span><span style="color:#f8f8f2">Public</span><span style="color:#f8f8f2">.</span><span style="color:#f8f8f2">request_incr</span><span style="color:#f8f8f2">(</span><span style="color:#f8f8f2">Config</span><span style="color:#f8f8f2">[</span><span style="color:#e6db74">'cc'</span><span style="color:#f8f8f2">]</span><span style="color:#f8f8f2">[</span><span style="color:#e6db74">'status'</span><span style="color:#f8f8f2">]</span><span style="color:#f8f8f2">)</span><span class="eol">¬</span></div>
<div class="an" style="top:531px">116</div>
<div class="a" style="left:438.4px;top:531px;width:1px;height:20px;background:repeating-linear-gradient(#45453f 0 2px,transparent 2px 5px)"></div>
<div class="a" style="left:476.8px;top:531px;width:1px;height:20px;background:repeating-linear-gradient(#45453f 0 2px,transparent 2px 5px)"></div>
<div class="al" style="left:400px;top:531px"><span class="sp">·</span><span class="sp">·</span><span class="sp">·</span><span class="sp">·</span><span class="sp">·</span><span class="sp">·</span><span class="sp">·</span><span class="sp">·</span><span class="sp">·</span><span class="sp">·</span><span class="sp">·</span><span class="sp">·</span><span style="color:#f8f8f2">ngx</span><span style="color:#f8f8f2">.</span><span style="color:#66d9ef">exit</span><span style="color:#f8f8f2">(</span><span style="color:#f8f8f2">Config</span><span style="color:#f8f8f2">[</span><span style="color:#e6db74">'cc'</span><span style="color:#f8f8f2">]</span><span style="color:#f8f8f2">[</span><span style="color:#e6db74">'status'</span><span style="color:#f8f8f2">]</span><span style="color:#f8f8f2">)</span><span class="eol">¬</span></div>
<div class="an" style="top:551px">117</div>
<div class="a" style="left:438.4px;top:551px;width:1px;height:20px;background:repeating-linear-gradient(#45453f 0 2px,transparent 2px 5px)"></div>
<div class="al" style="left:400px;top:551px"><span class="sp">·</span><span class="sp">·</span><span class="sp">·</span><span class="sp">·</span><span class="sp">·</span><span class="sp">·</span><span class="sp">·</span><span class="sp">·</span><span style="color:#f92672">end</span><span class="eol">¬</span></div>
<div class="an" style="top:571px">118</div>
<div class="a" style="left:438.4px;top:571px;width:1px;height:20px;background:repeating-linear-gradient(#45453f 0 2px,transparent 2px 5px)"></div>
<div class="al" style="left:400px;top:571px"><span class="sp">·</span><span class="sp">·</span><span class="sp">·</span><span class="sp">·</span><span class="sp">·</span><span class="sp">·</span><span class="sp">·</span><span class="sp">·</span><span style="color:#f92672">return</span><span class="sp">·</span><span style="color:#ae81ff">false</span><span class="eol">¬</span></div>
<div class="an" style="top:591px">119</div>
<div class="al" style="left:400px;top:591px"><span class="sp">·</span><span class="sp">·</span><span class="sp">·</span><span class="sp">·</span><span style="color:#f92672">else</span><span class="eol">¬</span></div>
<div class="an" style="top:611px">120</div>
<div class="a" style="left:438.4px;top:611px;width:1px;height:20px;background:repeating-linear-gradient(#45453f 0 2px,transparent 2px 5px)"></div>
<div class="al" style="left:400px;top:611px"><span class="sp">·</span><span class="sp">·</span><span class="sp">·</span><span class="sp">·</span><span class="sp">·</span><span class="sp">·</span><span class="sp">·</span><span class="sp">·</span><span style="color:#f92672">if</span><span class="sp">·</span><span style="color:#f8f8f2">Public</span><span style="color:#f8f8f2">.</span><span style="color:#f8f8f2">arrlen</span><span style="color:#f8f8f2">(</span><span style="color:#f8f8f2">BTWAF_RULES</span><span style="color:#f8f8f2">.</span><span style="color:#f8f8f2">ip_black_rules</span><span style="color:#f8f8f2">)</span><span style="color:#f92672">=</span><span style="color:#f92672">=</span><span style="color:#ae81ff">0</span><span class="sp">·</span><span style="color:#f92672">then</span><span class="sp">·</span><span style="color:#f92672">return</span><span class="sp">·</span><span style="color:#ae81ff">false</span><span class="sp">·</span><span style="color:#f92672">end</span><span class="sp">·</span><span class="eol">¬</span></div>
<div class="an" style="top:631px">121</div>
<div class="a" style="left:438.4px;top:631px;width:1px;height:20px;background:repeating-linear-gradient(#45453f 0 2px,transparent 2px 5px)"></div>
<div class="al" style="left:400px;top:631px"><span class="sp">·</span><span class="sp">·</span><span class="sp">·</span><span class="sp">·</span><span class="tb" style="width:38.4px"></span><span style="color:#f92672">for</span><span class="sp">·</span><span style="color:#f8f8f2">_</span><span style="color:#f8f8f2">,</span><span style="color:#f8f8f2">rule</span><span class="sp">·</span><span style="color:#f92672">in</span><span class="sp">·</span><span style="color:#66d9ef">ipairs</span><span style="color:#f8f8f2">(</span><span style="color:#f8f8f2">BTWAF_RULES</span><span style="color:#f8f8f2">.</span><span style="color:#f8f8f2">ip_black_rules</span><span style="color:#f8f8f2">)</span><span class="eol">¬</span></div>
<div class="an" style="top:651px">122</div>
<svg class="a" style="left:384px;top:658px" width="9" height="6" viewBox="0 0 9 6"><path d="M0.5 0.5 H8.5 L4.5 5.5 Z" fill="#75756f"/></svg>
<div class="a" style="left:438.4px;top:651px;width:1px;height:20px;background:repeating-linear-gradient(#45453f 0 2px,transparent 2px 5px)"></div>
<div class="al" style="left:400px;top:651px"><span class="sp">·</span><span class="sp">·</span><span class="sp">·</span><span class="sp">·</span><span class="tb" style="width:38.4px"></span><span style="color:#f92672">do</span><span class="eol">¬</span></div>
<div class="an" style="top:671px">123</div>
<svg class="a" style="left:384px;top:678px" width="9" height="6" viewBox="0 0 9 6"><path d="M0.5 0.5 H8.5 L4.5 5.5 Z" fill="#75756f"/></svg>
<div class="a" style="left:438.4px;top:671px;width:1px;height:20px;background:repeating-linear-gradient(#45453f 0 2px,transparent 2px 5px)"></div>
<div class="a" style="left:476.8px;top:671px;width:1px;height:20px;background:repeating-linear-gradient(#45453f 0 2px,transparent 2px 5px)"></div>
<div class="al" style="left:400px;top:671px"><span class="sp">·</span><span class="sp">·</span><span class="sp">·</span><span class="sp">·</span><span class="tb" style="width:38.4px"></span><span class="tb" style="width:38.4px"></span><span style="color:#f92672">if</span><span class="sp">·</span><span style="color:#f8f8f2">IpInfo</span><span style="color:#f8f8f2">.</span><span style="color:#f8f8f2">compare_ip2</span><span style="color:#f8f8f2">(</span><span style="color:#f8f8f2">rule</span><span style="color:#f8f8f2">)</span><span class="sp">·</span><span style="color:#f92672">then</span><span class="sp">·</span><span class="eol">¬</span></div>
<div class="an" style="top:691px">124</div>
<div class="a" style="left:438.4px;top:691px;width:1px;height:20px;background:repeating-linear-gradient(#45453f 0 2px,transparent 2px 5px)"></div>
<div class="a" style="left:476.8px;top:691px;width:1px;height:20px;background:repeating-linear-gradient(#45453f 0 2px,transparent 2px 5px)"></div>
<div class="a" style="left:515.2px;top:691px;width:1px;height:20px;background:repeating-linear-gradient(#45453f 0 2px,transparent 2px 5px)"></div>
<div class="al" style="left:400px;top:691px"><span class="tb" style="width:38.4px"></span><span class="tb" style="width:38.4px"></span><span class="tb" style="width:38.4px"></span><span class="tb" style="width:38.4px"></span><span style="color:#f92672">local</span><span class="sp">·</span><span style="color:#f8f8f2">rule_msg</span><span style="color:#f92672">=</span><span style="color:#e6db74">"</span><span class="sp">·</span><b class="a2" style="color:#e6db74">触</b><b class="a2" style="color:#e6db74">发</b><b class="a2" style="color:#e6db74">规</b><b class="a2" style="color:#e6db74">则</b><span style="color:#e6db74">:"</span><span style="color:#f92672">..</span><span style="color:#f8f8f2">Public</span><span style="color:#f8f8f2">.</span><span style="color:#f8f8f2">long2ip</span><span style="color:#f8f8f2">(</span><span style="color:#f8f8f2">rule</span><span style="color:#f8f8f2">[</span><span style="color:#ae81ff">1</span><span style="color:#f8f8f2">]</span><span style="color:#f8f8f2">)</span><span style="color:#f92672">..</span><span style="color:#e6db74">"-"</span><span style="color:#f92672">..</span><span style="color:#f8f8f2">Public</span><span style="color:#f8f8f2">.</span><span style="color:#f8f8f2">long2ip</span><span style="color:#f8f8f2">(</span><span style="color:#f8f8f2">rule</span><span style="color:#f8f8f2">[</span><span style="color:#ae81ff">2</span><span style="color:#f8f8f2">]</span><span style="color:#f8f8f2">)</span><span class="eol">¬</span></div>
<div class="an" style="top:711px">125</div>
<div class="a" style="left:438.4px;top:711px;width:1px;height:20px;background:repeating-linear-gradient(#45453f 0 2px,transparent 2px 5px)"></div>
<div class="a" style="left:476.8px;top:711px;width:1px;height:20px;background:repeating-linear-gradient(#45453f 0 2px,transparent 2px 5px)"></div>
<div class="a" style="left:515.2px;top:711px;width:1px;height:20px;background:repeating-linear-gradient(#45453f 0 2px,transparent 2px 5px)"></div>
<div class="al" style="left:400px;top:711px"><span class="tb" style="width:38.4px"></span><span class="tb" style="width:38.4px"></span><span class="tb" style="width:38.4px"></span><span class="tb" style="width:38.4px"></span><span style="color:#f8f8f2">ngx</span><span style="color:#f8f8f2">.</span><span style="color:#f8f8f2">var</span><span style="color:#f8f8f2">.</span><span style="color:#f8f8f2">waf2monitor_blocked</span><span style="color:#f92672">=</span><span style="color:#e6db74">"IP</span><b class="a2" style="color:#e6db74">黑</b><b class="a2" style="color:#e6db74">名</b><b class="a2" style="color:#e6db74">单</b><span style="color:#e6db74">"</span><span class="eol">¬</span></div>
<div class="an" style="top:731px">126</div>
<div class="a" style="left:438.4px;top:731px;width:1px;height:20px;background:repeating-linear-gradient(#45453f 0 2px,transparent 2px 5px)"></div>
<div class="a" style="left:476.8px;top:731px;width:1px;height:20px;background:repeating-linear-gradient(#45453f 0 2px,transparent 2px 5px)"></div>
<div class="a" style="left:515.2px;top:731px;width:1px;height:20px;background:repeating-linear-gradient(#45453f 0 2px,transparent 2px 5px)"></div>
<div class="al" style="left:400px;top:731px"><span class="sp">·</span><span class="sp">·</span><span class="sp">·</span><span class="sp">·</span><span class="tb" style="width:38.4px"></span><span class="tb" style="width:38.4px"></span><span class="sp">·</span><span class="sp">·</span><span class="sp">·</span><span class="sp">·</span><span style="color:#f8f8f2">Public</span><span style="color:#f8f8f2">.</span><span style="color:#f8f8f2">log_rule_hit</span><span style="color:#f8f8f2">(</span><span style="color:#ae81ff">1</span><span style="color:#f8f8f2">,</span><span style="color:#e6db74">"IP</span><b class="a2" style="color:#e6db74">黑</b><b class="a2" style="color:#e6db74">名</b><b class="a2" style="color:#e6db74">单</b><span style="color:#e6db74">"</span><span style="color:#f8f8f2">,</span><span style="color:#f8f8f2">ngx</span><span style="color:#f8f8f2">.</span><span style="color:#f8f8f2">ctx</span><span style="color:#f8f8f2">.</span><span style="color:#66d9ef">time</span><span style="color:#f8f8f2">,</span><span class="sp">·</span><span style="color:#e6db74">"IP</span><b class="a2" style="color:#e6db74">黑</b><b class="a2" style="color:#e6db74">名</b><b class="a2" style="color:#e6db74">单</b><span style="color:#e6db74">"</span><span style="color:#f8f8f2">,</span><span class="sp">·</span><span style="color:#e6db74">"</span><b class="a2" style="color:#e6db74">匹</b><b class="a2" style="color:#e6db74">配</b><b class="a2" style="color:#e6db74">到</b><span style="color:#e6db74">IP</span><b class="a2" style="color:#e6db74">黑</b><b class="a2" style="color:#e6db74">名</b><b class="a2" style="color:#e6db74">单</b><span style="color:#e6db74">"</span><span style="color:#f92672">..</span><span style="color:#f8f8f2">ngx</span><span class="eol">¬</span></div>
<div class="al" style="left:592.0px;top:751px"><span style="color:#f8f8f2">.</span><span style="color:#f8f8f2">ctx</span><span style="color:#f8f8f2">.</span><span style="color:#f8f8f2">ip</span><span style="color:#f8f8f2">)</span><span class="eol">¬</span></div>
<div class="an" style="top:771px">127</div>
<div class="a" style="left:438.4px;top:771px;width:1px;height:20px;background:repeating-linear-gradient(#45453f 0 2px,transparent 2px 5px)"></div>
<div class="a" style="left:476.8px;top:771px;width:1px;height:20px;background:repeating-linear-gradient(#45453f 0 2px,transparent 2px 5px)"></div>
<div class="a" style="left:515.2px;top:771px;width:1px;height:20px;background:repeating-linear-gradient(#45453f 0 2px,transparent 2px 5px)"></div>
<div class="al" style="left:400px;top:771px"><span class="tb" style="width:38.4px"></span><span class="tb" style="width:38.4px"></span><span class="tb" style="width:38.4px"></span><span class="tb" style="width:38.4px"></span><span style="color:#f8f8f2">IpInfo</span><span style="color:#f8f8f2">.</span><span style="color:#f8f8f2">bt_ip_filter</span><span style="color:#f8f8f2">(</span><span style="color:#f8f8f2">ip</span><span style="color:#f8f8f2">,</span><span style="color:#ae81ff">86400</span><span style="color:#f8f8f2">)</span><span class="eol">¬</span></div>
<div class="an" style="top:791px">128</div>
<div class="a" style="left:438.4px;top:791px;width:1px;height:20px;background:repeating-linear-gradient(#45453f 0 2px,transparent 2px 5px)"></div>
<div class="a" style="left:476.8px;top:791px;width:1px;height:20px;background:repeating-linear-gradient(#45453f 0 2px,transparent 2px 5px)"></div>
<div class="a" style="left:515.2px;top:791px;width:1px;height:20px;background:repeating-linear-gradient(#45453f 0 2px,transparent 2px 5px)"></div>
<div class="al" style="left:400px;top:791px"><span class="tb" style="width:38.4px"></span><span class="tb" style="width:38.4px"></span><span class="tb" style="width:38.4px"></span><span class="tb" style="width:38.4px"></span><span style="color:#f8f8f2">Public</span><span style="color:#f8f8f2">.</span><span style="color:#f8f8f2">request_incr</span><span style="color:#f8f8f2">(</span><span style="color:#f8f8f2">Config</span><span style="color:#f8f8f2">[</span><span style="color:#e6db74">'cc'</span><span style="color:#f8f8f2">]</span><span style="color:#f8f8f2">[</span><span style="color:#e6db74">'status'</span><span style="color:#f8f8f2">]</span><span style="color:#f8f8f2">)</span><span class="eol">¬</span></div>
<div class="an" style="top:811px">129</div>
<div class="a" style="left:438.4px;top:811px;width:1px;height:20px;background:repeating-linear-gradient(#45453f 0 2px,transparent 2px 5px)"></div>
<div class="a" style="left:476.8px;top:811px;width:1px;height:20px;background:repeating-linear-gradient(#45453f 0 2px,transparent 2px 5px)"></div>
<div class="a" style="left:515.2px;top:811px;width:1px;height:20px;background:repeating-linear-gradient(#45453f 0 2px,transparent 2px 5px)"></div>
<div class="al" style="left:400px;top:811px"><span class="sp">·</span><span class="sp">·</span><span class="sp">·</span><span class="sp">·</span><span class="tb" style="width:38.4px"></span><span class="tb" style="width:38.4px"></span><span class="sp">·</span><span class="sp">·</span><span class="sp">·</span><span class="sp">·</span><span style="color:#f8f8f2">ngx</span><span style="color:#f8f8f2">.</span><span style="color:#66d9ef">exit</span><span style="color:#f8f8f2">(</span><span style="color:#f8f8f2">Config</span><span style="color:#f8f8f2">[</span><span style="color:#e6db74">'cc'</span><span style="color:#f8f8f2">]</span><span style="color:#f8f8f2">[</span><span style="color:#e6db74">'status'</span><span style="color:#f8f8f2">]</span><span style="color:#f8f8f2">)</span><span class="eol">¬</span></div>
<div class="an" style="top:831px">130</div>
<div class="a" style="left:438.4px;top:831px;width:1px;height:20px;background:repeating-linear-gradient(#45453f 0 2px,transparent 2px 5px)"></div>
<div class="a" style="left:476.8px;top:831px;width:1px;height:20px;background:repeating-linear-gradient(#45453f 0 2px,transparent 2px 5px)"></div>
<div class="al" style="left:400px;top:831px"><span class="sp">·</span><span class="sp">·</span><span class="sp">·</span><span class="sp">·</span><span class="tb" style="width:38.4px"></span><span class="tb" style="width:38.4px"></span><span style="color:#f92672">return</span><span class="sp">·</span><span style="color:#ae81ff">true</span><span class="sp">·</span><span style="color:#f92672">end</span><span class="eol">¬</span></div>
<div class="an" style="top:851px">131</div>
<div class="a" style="left:438.4px;top:851px;width:1px;height:20px;background:repeating-linear-gradient(#45453f 0 2px,transparent 2px 5px)"></div>
<div class="al" style="left:400px;top:851px"><span class="sp">·</span><span class="sp">·</span><span class="sp">·</span><span class="sp">·</span><span class="tb" style="width:38.4px"></span><span style="color:#f92672">end</span><span class="eol">¬</span></div>
<div class="an" style="top:871px">132</div>
<div class="a" style="left:438.4px;top:871px;width:1px;height:20px;background:repeating-linear-gradient(#45453f 0 2px,transparent 2px 5px)"></div>
<div class="al" style="left:400px;top:871px"><span class="sp">·</span><span class="sp">·</span><span class="sp">·</span><span class="sp">·</span><span class="tb" style="width:38.4px"></span><span style="color:#f92672">return</span><span class="sp">·</span><span style="color:#ae81ff">false</span><span class="eol">¬</span></div>
<div class="an" style="top:891px">133</div>
<div class="al" style="left:400px;top:891px"><span class="sp">·</span><span class="sp">·</span><span class="sp">·</span><span class="sp">·</span><span style="color:#f92672">end</span><span class="sp">·</span><span class="eol">¬</span></div>
<div class="an" style="top:911px">134</div>
<div class="al" style="left:400px;top:911px"><span class="sp">·</span><span class="sp">·</span><span class="sp">·</span><span class="sp">·</span><span class="eol">¬</span></div>
<div class="an" style="top:931px">135</div>
<div class="al" style="left:400px;top:931px"><span style="color:#f92672">end</span><span class="eol">¬</span></div>
<div class="an" style="top:951px">136</div>
<div class="al" style="left:400px;top:951px"><span class="eol">¬</span></div>
<div class="an" style="top:971px">137</div>
<svg class="a" style="left:384px;top:978px" width="9" height="6" viewBox="0 0 9 6"><path d="M0.5 0.5 H8.5 L4.5 5.5 Z" fill="#75756f"/></svg>
<div class="al" style="left:400px;top:971px"><span style="color:#f92672">function</span><span class="sp">·</span><span style="color:#f8f8f2">white_balck</span><span style="color:#f8f8f2">.</span><span style="color:#f8f8f2">ip_white</span><span style="color:#f8f8f2">(</span><span style="color:#f8f8f2">)</span><span class="eol">¬</span></div>
<div class="an" style="top:991px">138</div>
<div class="al" style="left:400px;top:991px"><span class="sp">·</span><span class="sp">·</span><span class="sp">·</span><span class="sp">·</span><span style="color:#f92672">local</span><span class="sp">·</span><span style="color:#f8f8f2">ip</span><span style="color:#f92672">=</span><span style="color:#f8f8f2">ngx</span><span style="color:#f8f8f2">.</span><span style="color:#f8f8f2">ctx</span><span style="color:#f8f8f2">.</span><span style="color:#f8f8f2">ip</span><span class="eol">¬</span></div>
<div class="an" style="top:1011px">139</div>
<svg class="a" style="left:384px;top:1018px" width="9" height="6" viewBox="0 0 9 6"><path d="M0.5 0.5 H8.5 L4.5 5.5 Z" fill="#75756f"/></svg>
<div class="al" style="left:400px;top:1011px"><span class="sp">·</span><span class="sp">·</span><span class="sp">·</span><span class="sp">·</span><span style="color:#f92672">if</span><span class="sp">·</span><span style="color:#f8f8f2">ngx</span><span style="color:#f8f8f2">.</span><span style="color:#f8f8f2">ctx</span><span style="color:#f8f8f2">.</span><span style="color:#f8f8f2">ipv6</span><span style="color:#f92672">=</span><span style="color:#f92672">=</span><span style="color:#ae81ff">1</span><span class="sp">·</span><span style="color:#f92672">and</span><span class="sp">·</span><span style="color:#f8f8f2">BTWAF_RULES</span><span style="color:#f8f8f2">.</span><span style="color:#f8f8f2">ipv6_white_count</span><span style="color:#f92672">&gt;</span><span style="color:#f92672">=</span><span style="color:#ae81ff">1</span><span class="sp">·</span><span style="color:#f92672">then</span><span class="eol">¬</span></div>
<div class="an" style="top:1031px">140</div>
<svg class="a" style="left:384px;top:1038px" width="9" height="6" viewBox="0 0 9 6"><path d="M0.5 0.5 H8.5 L4.5 5.5 Z" fill="#75756f"/></svg>
<div class="a" style="left:438.4px;top:1031px;width:1px;height:20px;background:repeating-linear-gradient(#45453f 0 2px,transparent 2px 5px)"></div>
<div class="al" style="left:400px;top:1031px"><span class="sp">·</span><span class="sp">·</span><span class="sp">·</span><span class="sp">·</span><span class="sp">·</span><span class="sp">·</span><span class="sp">·</span><span class="sp">·</span><span style="color:#f92672">if</span><span class="sp">·</span><span style="color:#f8f8f2">BTWAF_RULES</span><span style="color:#f8f8f2">.</span><span style="color:#f8f8f2">ipv6_white</span><span style="color:#f92672">:</span><span style="color:#66d9ef">match</span><span style="color:#f8f8f2">(</span><span style="color:#f8f8f2">ip</span><span style="color:#f8f8f2">)</span><span class="sp">·</span><span style="color:#f92672">then</span><span class="eol">¬</span></div>
<div class="an" style="top:1051px">141</div>
<div class="a" style="left:438.4px;top:1051px;width:1px;height:20px;background:repeating-linear-gradient(#45453f 0 2px,transparent 2px 5px)"></div>
<div class="a" style="left:476.8px;top:1051px;width:1px;height:20px;background:repeating-linear-gradient(#45453f 0 2px,transparent 2px 5px)"></div>
<div class="al" style="left:400px;top:1051px"><span class="sp">·</span><span class="sp">·</span><span class="sp">·</span><span class="sp">·</span><span class="sp">·</span><span class="sp">·</span><span class="sp">·</span><span class="sp">·</span><span class="sp">·</span><span class="sp">·</span><span class="sp">·</span><span class="sp">·</span><span style="color:#f8f8f2">ngx</span><span style="color:#f8f8f2">.</span><span style="color:#f8f8f2">var</span><span style="color:#f8f8f2">.</span><span style="color:#f8f8f2">waf2monitor_blocked</span><span style="color:#f92672">=</span><span style="color:#e6db74">"IP</span><b class="a2" style="color:#e6db74">白</b><b class="a2" style="color:#e6db74">名</b><b class="a2" style="color:#e6db74">单</b><span style="color:#e6db74">"</span><span class="eol">¬</span></div>
<div class="an" style="top:1071px">142</div>
<div class="a" style="left:438.4px;top:1071px;width:1px;height:20px;background:repeating-linear-gradient(#45453f 0 2px,transparent 2px 5px)"></div>
<div class="a" style="left:476.8px;top:1071px;width:1px;height:20px;background:repeating-linear-gradient(#45453f 0 2px,transparent 2px 5px)"></div>
<div class="al" style="left:400px;top:1071px"><span class="sp">·</span><span class="sp">·</span><span class="sp">·</span><span class="sp">·</span><span class="sp">·</span><span class="sp">·</span><span class="sp">·</span><span class="sp">·</span><span class="sp">·</span><span class="sp">·</span><span class="sp">·</span><span class="sp">·</span><span style="color:#f8f8f2">Public</span><span style="color:#f8f8f2">.</span><span style="color:#f8f8f2">log_rule_hit</span><span style="color:#f8f8f2">(</span><span style="color:#ae81ff">0</span><span style="color:#f8f8f2">,</span><span style="color:#e6db74">"ip</span><b class="a2" style="color:#e6db74">白</b><b class="a2" style="color:#e6db74">名</b><b class="a2" style="color:#e6db74">单</b><span style="color:#e6db74">"</span><span style="color:#f8f8f2">,</span><span style="color:#f8f8f2">ngx</span><span style="color:#f8f8f2">.</span><span style="color:#f8f8f2">ctx</span><span style="color:#f8f8f2">.</span><span style="color:#66d9ef">time</span><span style="color:#f8f8f2">,</span><span class="sp">·</span><span style="color:#e6db74">"IP</span><b class="a2" style="color:#e6db74">白</b><b class="a2" style="color:#e6db74">名</b><b class="a2" style="color:#e6db74">单</b><span style="color:#e6db74">"</span><span style="color:#f8f8f2">,</span><span class="sp">·</span><span style="color:#e6db74">"</span><b class="a2" style="color:#e6db74">匹</b><b class="a2" style="color:#e6db74">配</b><b class="a2" style="color:#e6db74">到</b><span style="color:#e6db74">IP</span><b class="a2" style="color:#e6db74">白</b><b class="a2" style="color:#e6db74">名</b><b class="a2" style="color:#e6db74">单</b><span style="color:#e6db74">"</span><span style="color:#f92672">..</span><span style="color:#f8f8f2">ip</span><span style="color:#f8f8f2">)</span><span class="eol">¬</span></div>
<div class="an" style="top:1091px">143</div>
<div class="a" style="left:438.4px;top:1091px;width:1px;height:20px;background:repeating-linear-gradient(#45453f 0 2px,transparent 2px 5px)"></div>
<div class="a" style="left:476.8px;top:1091px;width:1px;height:20px;background:repeating-linear-gradient(#45453f 0 2px,transparent 2px 5px)"></div>
<div class="al" style="left:400px;top:1091px"><span class="sp">·</span><span class="sp">·</span><span class="sp">·</span><span class="sp">·</span><span class="sp">·</span><span class="sp">·</span><span class="sp">·</span><span class="sp">·</span><span class="sp">·</span><span class="sp">·</span><span class="sp">·</span><span class="sp">·</span><span style="color:#f92672">return</span><span class="sp">·</span><span style="color:#ae81ff">true</span><span class="eol">¬</span></div>
<div class="an" style="top:1111px">144</div>
<div class="a" style="left:438.4px;top:1111px;width:1px;height:20px;background:repeating-linear-gradient(#45453f 0 2px,transparent 2px 5px)"></div>
<div class="al" style="left:400px;top:1111px"><span class="sp">·</span><span class="sp">·</span><span class="sp">·</span><span class="sp">·</span><span class="sp">·</span><span class="sp">·</span><span class="sp">·</span><span class="sp">·</span><span style="color:#f92672">end</span><span class="eol">¬</span></div>
<div class="an" style="top:1131px">145</div>
<div class="a" style="left:438.4px;top:1131px;width:1px;height:20px;background:repeating-linear-gradient(#45453f 0 2px,transparent 2px 5px)"></div>
<div class="al" style="left:400px;top:1131px"><span class="sp">·</span><span class="sp">·</span><span class="sp">·</span><span class="sp">·</span><span class="sp">·</span><span class="sp">·</span><span class="sp">·</span><span class="sp">·</span><span style="color:#f92672">return</span><span class="sp">·</span><span style="color:#ae81ff">false</span><span class="eol">¬</span></div>
<div class="a" style="left:325px;top:160px;width:938px;height:55px;background:#000000"></div>
<svg style="position:absolute;left:336px;top:176px" width="20" height="20" viewBox="0 0 20 20"><circle cx="9" cy="11" r="8.6" fill="none" stroke="#f58a2e" stroke-width="0.8" stroke-dasharray="1 1"/><circle cx="9" cy="11" r="7.4" fill="#f58a2e"/><circle cx="11" cy="9" r="1.9" fill="#000"/><circle cx="16.6" cy="3.4" r="2.1" fill="#f58a2e"/></svg>
<div class="tab2" style="left:367px">database.lua</div>
<svg class="x2" style="left:500px" viewBox="0 0 15 15"><path d="M2 2 L13 13 M13 2 L2 13" stroke="#fff" stroke-width="2.6"/></svg>
<div class="a" style="left:529px;top:162px;width:1px;height:50px;background:#2a2a2a"></div>
<svg style="position:absolute;left:542px;top:176px" width="20" height="20" viewBox="0 0 20 20"><circle cx="9" cy="11" r="8.6" fill="none" stroke="#f58a2e" stroke-width="0.8" stroke-dasharray="1 1"/><circle cx="9" cy="11" r="7.4" fill="#f58a2e"/><circle cx="11" cy="9" r="1.9" fill="#000"/><circle cx="16.6" cy="3.4" r="2.1" fill="#f58a2e"/></svg>
<div class="tab2" style="left:572px">ipinfo.lua</div>
<svg class="x2" style="left:678px" viewBox="0 0 15 15"><path d="M2 2 L13 13 M13 2 L2 13" stroke="#fff" stroke-width="2.6"/></svg>
<div class="a" style="left:706px;top:162px;width:1px;height:50px;background:#2a2a2a"></div>
<svg style="position:absolute;left:720px;top:176px" width="20" height="20" viewBox="0 0 20 20"><circle cx="9" cy="11" r="8.6" fill="none" stroke="#f58a2e" stroke-width="0.8" stroke-dasharray="1 1"/><circle cx="9" cy="11" r="7.4" fill="#f58a2e"/><circle cx="11" cy="9" r="1.9" fill="#000"/><circle cx="16.6" cy="3.4" r="2.1" fill="#f58a2e"/></svg>
<div class="tab2" style="left:749px">public.lua</div>
<svg class="x2" style="left:858px" viewBox="0 0 15 15"><path d="M2 2 L13 13 M13 2 L2 13" stroke="#fff" stroke-width="2.6"/></svg>
<div class="a" style="left:887px;top:162px;width:1px;height:50px;background:#2a2a2a"></div>
<svg style="position:absolute;left:900px;top:176px" width="20" height="20" viewBox="0 0 20 20"><circle cx="9" cy="11" r="8.6" fill="none" stroke="#f58a2e" stroke-width="0.8" stroke-dasharray="1 1"/><circle cx="9" cy="11" r="7.4" fill="#f58a2e"/><circle cx="11" cy="9" r="1.9" fill="#000"/><circle cx="16.6" cy="3.4" r="2.1" fill="#f58a2e"/></svg>
<div class="tab2" style="left:930px">route.lua</div>
<svg class="x2" style="left:1033px" viewBox="0 0 15 15"><path d="M2 2 L13 13 M13 2 L2 13" stroke="#fff" stroke-width="2.6"/></svg>
<div class="a" style="left:1060px;top:162px;width:1px;height:50px;background:#2a2a2a"></div>
<svg style="position:absolute;left:1074px;top:176px" width="20" height="20" viewBox="0 0 20 20"><circle cx="9" cy="11" r="8.6" fill="none" stroke="#f58a2e" stroke-width="0.8" stroke-dasharray="1 1"/><circle cx="9" cy="11" r="7.4" fill="#f58a2e"/><circle cx="11" cy="9" r="1.9" fill="#000"/><circle cx="16.6" cy="3.4" r="2.1" fill="#f58a2e"/></svg>
<div class="tab2" style="left:1104px">workers.lua</div>
<svg class="x2" style="left:1227px" viewBox="0 0 15 15"><path d="M2 2 L13 13 M13 2 L2 13" stroke="#fff" stroke-width="2.6"/></svg>
<div class="a" style="left:1255px;top:162px;width:1px;height:50px;background:#2a2a2a"></div>
<div class="a" style="left:1255px;top:162px;width:8px;height:50px;background:#1a1a1a"></div><div class="a" style="left:1255px;top:210px;width:8px;height:2px;background:#2bbf4f"></div>
<div class="a" style="left:325px;top:602px;width:18px;height:62px;background:#1e1e1e;border-radius:0 17px 17px 0;border:1px solid #555;border-left:none"></div>
<svg class="a" style="left:327px;top:623px" width="12" height="20" viewBox="0 0 12 20"><path d="M9.5 2 L2.5 10 L9.5 18" fill="none" stroke="#fff" stroke-width="1.6"/></svg>
</div>
</body></html>
